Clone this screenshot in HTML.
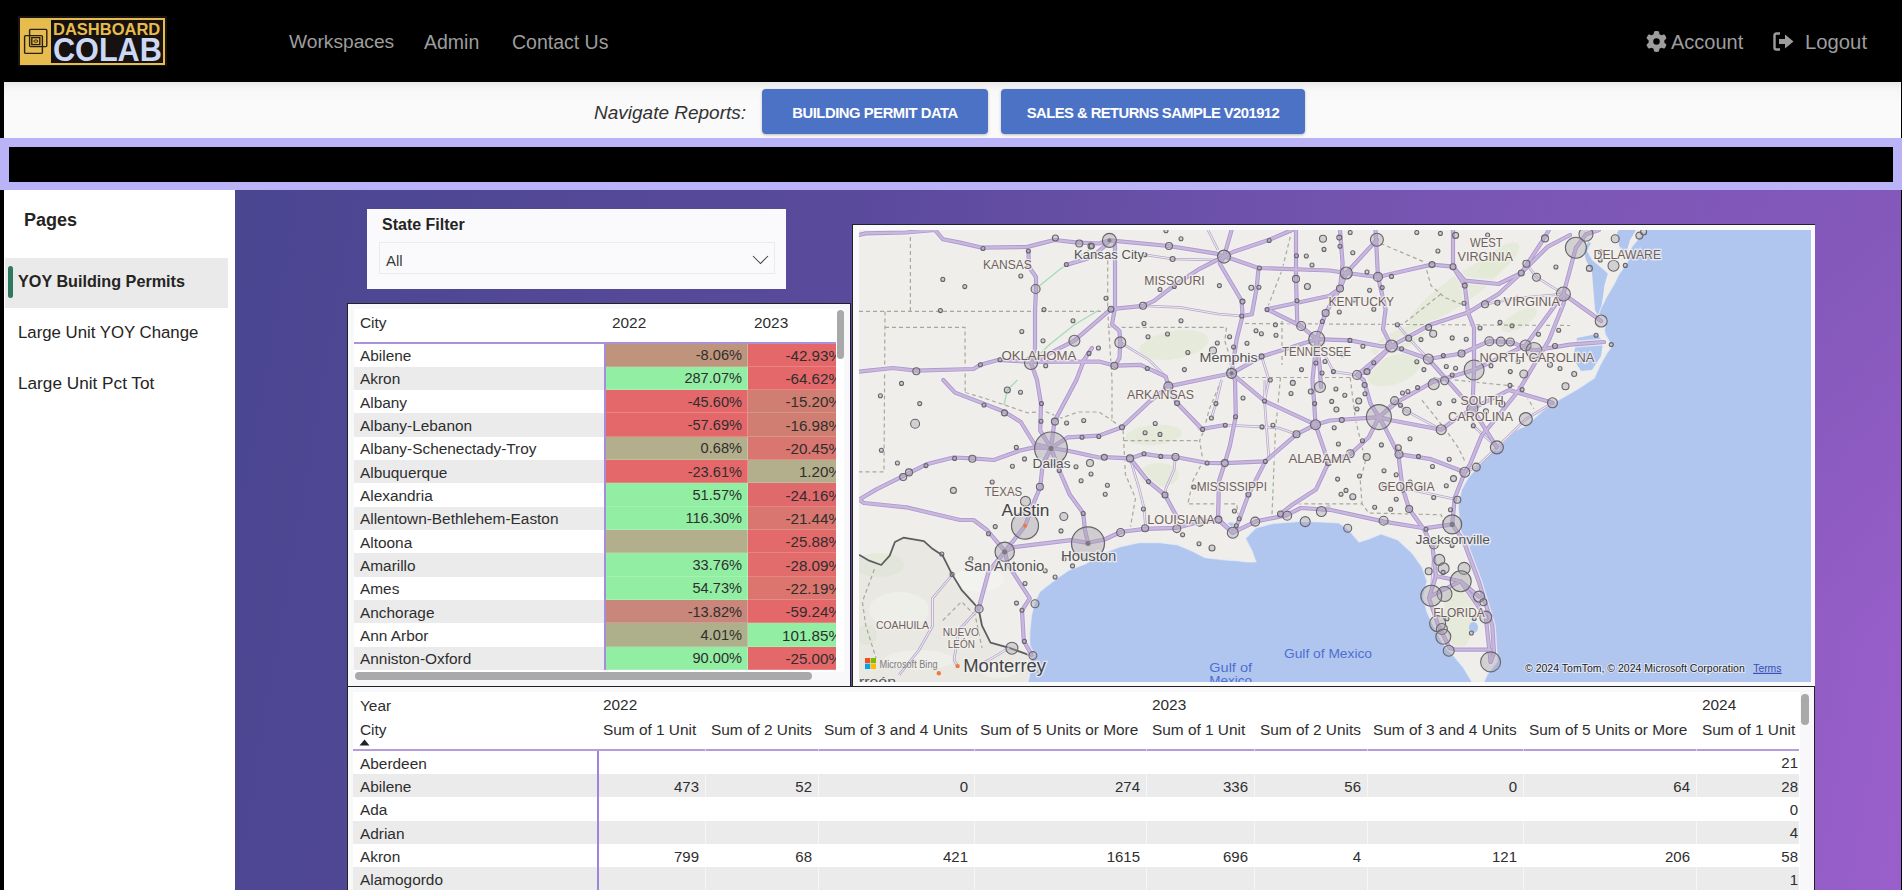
<!DOCTYPE html>
<html><head><meta charset="utf-8">
<style>
*{box-sizing:border-box;margin:0;padding:0}
html,body{width:1902px;height:890px;overflow:hidden;background:#000;font-family:"Liberation Sans",sans-serif;color:#252423}
.abs{position:absolute}
#top{position:absolute;left:0;top:0;width:1902px;height:82px;background:#000}
.nav{position:absolute;top:30px;font-size:19.5px;color:#9d9d9d;white-space:nowrap;line-height:24px}
#rep{position:absolute;left:4px;top:82px;width:1897px;height:56px;background:linear-gradient(#e9e9e9 0px,#f7f7f7 8px,#fafafa 20px)}
.btn{position:absolute;top:89px;height:45px;background:#4b72c5;border-radius:4px;color:#fff;font-weight:bold;font-size:14.8px;line-height:48.5px;text-align:center;box-shadow:0 1px 3px rgba(0,0,0,.25);white-space:nowrap}
#pbar{position:absolute;left:0;top:138px;width:1902px;height:52px;background:#bbb3f8}
#pbar .in{position:absolute;left:9px;top:9px;width:1884px;height:35px;background:#000}
#side{position:absolute;left:4px;top:190px;width:231px;height:700px;background:#fff}
#canvas{position:absolute;left:235px;top:190px;width:1666px;height:700px;background:radial-gradient(circle 450px at 100% 0%,rgba(74,70,144,.21) 0%,rgba(74,70,144,0) 100%),linear-gradient(100deg,#4a4690 0%,#5a4a9c 35%,#7a56b4 70%,#9a5fcb 100%)}
.card{position:absolute;background:#fafafc}
.bord{border:1px solid #222}
table{border-collapse:collapse}
.t{position:absolute;white-space:nowrap;font-size:15.4px;line-height:18px;color:#2e2e2e}
</style></head>
<body>
<div id="top">
  <!-- logo -->
  <div class="abs" style="left:18px;top:16px;width:149px;height:50px;background:#1a1410"></div>
  <div class="abs" style="left:20px;top:18px;width:145px;height:47px;background:#e6bc4f"></div>
  <div class="abs" style="left:51px;top:20px;width:112px;height:43px;background:#171110"></div>
  <svg class="abs" style="left:22px;top:26px" width="28" height="30" viewBox="0 0 28 30">
    <rect x="7.6" y="3.4" width="17.2" height="17.2" fill="none" stroke="#2a2010" stroke-width="1.4" rx="1"/>
    <rect x="2.6" y="9.6" width="17.8" height="17.8" fill="none" stroke="#2a2010" stroke-width="1.4" rx="1"/>
    <rect x="9.8" y="11.6" width="8" height="7" fill="none" stroke="#2a2010" stroke-width="1.4"/>
    <ellipse cx="13.8" cy="15.1" rx="2" ry="1.2" fill="none" stroke="#2a2010" stroke-width="1"/>
  </svg>
  <div class="abs" style="left:53px;top:19px;font-weight:bold;font-size:16.5px;line-height:20px;color:#e6bc4f;letter-spacing:0px">DASHBOARD</div>
  <div class="abs" style="left:53px;top:31.5px;font-weight:bold;font-size:34px;line-height:34px;color:#cbd8f6;transform:scaleX(0.9);transform-origin:0 0">COLAB</div>

  <div class="nav" style="left:289px;font-size:19.2px">Workspaces</div>
  <div class="nav" style="left:424px">Admin</div>
  <div class="nav" style="left:512px">Contact Us</div>
  <svg class="abs" style="left:1646px;top:31px" width="21" height="21" viewBox="0 0 512 512"><path fill="#9d9d9d" d="M495.9 166.6c3.2 8.7.5 18.4-6.4 24.6l-43.3 39.4c1.1 8.3 1.7 16.8 1.7 25.4s-.6 17.1-1.7 25.4l43.3 39.4c6.9 6.2 9.6 15.9 6.4 24.6-4.4 11.9-9.7 23.3-15.8 34.3l-4.7 8.1c-6.6 11-14 21.4-22.1 31.2-5.9 7.2-15.7 9.6-24.5 6.8l-55.7-17.7c-13.4 10.3-28.2 18.9-44 25.4l-12.5 57.1c-2 9.1-9 16.3-18.2 17.8-13.8 2.3-28 3.5-42.5 3.5s-28.7-1.2-42.5-3.5c-9.2-1.5-16.2-8.7-18.2-17.8l-12.5-57.1c-15.8-6.5-30.6-15.1-44-25.4L83.1 425.9c-8.8 2.8-18.6.3-24.5-6.8-8.1-9.8-15.5-20.2-22.1-31.2l-4.7-8.1c-6.1-11-11.4-22.4-15.8-34.3-3.2-8.7-.5-18.4 6.4-24.6l43.3-39.4C64.6 273.1 64 264.6 64 256s.6-17.1 1.7-25.4L22.4 191.2c-6.9-6.2-9.6-15.9-6.4-24.6 4.4-11.9 9.7-23.3 15.8-34.3l4.7-8.1c6.6-11 14-21.4 22.1-31.2 5.9-7.2 15.7-9.6 24.5-6.8l55.7 17.7c13.4-10.3 28.2-18.9 44-25.4l12.5-57.1c2-9.1 9-16.3 18.2-17.8C227.3 1.2 241.5 0 256 0s28.7 1.2 42.5 3.5c9.2 1.5 16.2 8.7 18.2 17.8l12.5 57.1c15.8 6.5 30.6 15.1 44 25.4l55.7-17.7c8.8-2.8 18.6-.3 24.5 6.8 8.1 9.8 15.5 20.2 22.1 31.2l4.7 8.1c6.1 11 11.4 22.4 15.8 34.3zM256 336a80 80 0 1 0 0-160 80 80 0 1 0 0 160z"/></svg>
  <div class="nav" style="left:1671px;font-size:20px">Account</div>
  <svg class="abs" style="left:1773px;top:32px" width="22" height="19" viewBox="0 0 22 19">
    <path d="M7 1.5 H3.5 Q1.5 1.5 1.5 3.5 V15.5 Q1.5 17.5 3.5 17.5 H7" fill="none" stroke="#9d9d9d" stroke-width="2.4"/>
    <path d="M6 7 H12 V2.5 L20.5 9.5 L12 16.5 V12 H6 Z" fill="#9d9d9d"/>
  </svg>
  <div class="nav" style="left:1805px;font-size:20.3px">Logout</div>
</div>

<div id="rep"></div>
<div class="abs" style="left:594px;top:101px;font-style:italic;font-size:19px;line-height:24px;color:#333">Navigate Reports:</div>
<div class="btn" style="left:762px;width:226px;letter-spacing:-0.45px">BUILDING PERMIT DATA</div>
<div class="btn" style="left:1001px;width:304px;letter-spacing:-0.55px">SALES &amp; RETURNS SAMPLE V201912</div>

<div id="pbar"><div class="in"></div></div>

<div id="side">
  <div class="abs" style="left:20px;top:18px;font-weight:bold;font-size:18px;line-height:24px;color:#252423">Pages</div>
  <div class="abs" style="left:1px;top:68px;width:223px;height:50px;background:#eaeaea"></div>
  <div class="abs" style="left:4px;top:76px;width:5px;height:32px;background:#2f7a5f;border-radius:3px"></div>
  <div class="abs" style="left:14px;top:80px;font-weight:bold;font-size:16.2px;line-height:22px;color:#252423">YOY Building Permits</div>
  <div class="abs" style="left:14px;top:131.5px;font-size:16.8px;line-height:22px;color:#252423">Large Unit YOY Change</div>
  <div class="abs" style="left:14px;top:181.5px;font-size:17.2px;line-height:22px;color:#252423">Large Unit Pct Tot</div>
</div>

<div id="canvas"></div>
<div class="abs" style="left:1901px;top:190px;width:1px;height:700px;background:#000"></div>

<!-- state filter -->
<div class="card" style="left:367px;top:209px;width:419px;height:80px">
  <div class="abs" style="left:15px;top:6px;font-weight:bold;font-size:16px;line-height:20px;color:#252423">State Filter</div>
  <div class="abs" style="left:12px;top:33px;width:396px;height:32px;border:1px solid #ebebee;background:#fafafc"></div>
  <div class="abs" style="left:19px;top:43px;font-size:15px;line-height:18px;color:#3a3a3a">All</div>
  <svg class="abs" style="left:385px;top:46px" width="17" height="10" viewBox="0 0 17 10"><path d="M1 1 L8.5 8.5 L16 1" fill="none" stroke="#3d3d45" stroke-width="1.05"/></svg>
</div>

<!-- city table card -->
<div class="abs" style="left:347px;top:303px;width:504px;height:384px;border:1px solid #222;background:#f8f8fb"></div>
<div class="abs" style="left:354px;top:309px;width:490px;height:363px;background:#fff"></div>
<div class="abs" style="left:354px;top:309px;width:482px;height:361px;overflow:hidden">
<div class="t" style="left:6px;top:5px;line-height:18px">City</div>
<div class="t" style="left:258px;top:5px">2022</div>
<div class="t" style="left:400px;top:5px">2023</div>
<div class="abs" style="left:0;top:33px;width:482px;height:2px;background:#ab92dc"></div>
<div class="abs" style="left:0;top:34.50px;width:250px;height:23.33px;background:#fff"></div>
<div class="t" style="left:6px;top:35.10px;line-height:23.33px">Abilene</div>
<div class="abs" style="left:251px;top:34.50px;width:143px;height:23.33px;background:#bf947c;border-bottom:1px solid rgba(255,255,255,.18);border-right:1px solid rgba(255,255,255,.25)"></div>
<div class="t" style="right:94px;top:35.00px;line-height:23.33px;font-size:14.6px">-8.06%</div>
<div class="abs" style="left:394px;top:34.50px;width:100px;height:23.33px;background:#e4686a;border-bottom:1px solid rgba(255,255,255,.18)"></div>
<div class="t" style="left:420px;top:34.80px;line-height:23.33px;font-size:15.2px;width:68px;text-align:right">-42.93%</div>
<div class="abs" style="left:0;top:57.83px;width:250px;height:23.33px;background:#ebebeb"></div>
<div class="t" style="left:6px;top:58.43px;line-height:23.33px">Akron</div>
<div class="abs" style="left:251px;top:57.83px;width:143px;height:23.33px;background:#91eea3;border-bottom:1px solid rgba(255,255,255,.18);border-right:1px solid rgba(255,255,255,.25)"></div>
<div class="t" style="right:94px;top:58.33px;line-height:23.33px;font-size:14.6px">287.07%</div>
<div class="abs" style="left:394px;top:57.83px;width:100px;height:23.33px;background:#e4686a;border-bottom:1px solid rgba(255,255,255,.18)"></div>
<div class="t" style="left:420px;top:58.13px;line-height:23.33px;font-size:15.2px;width:68px;text-align:right">-64.62%</div>
<div class="abs" style="left:0;top:81.16px;width:250px;height:23.33px;background:#fff"></div>
<div class="t" style="left:6px;top:81.76px;line-height:23.33px">Albany</div>
<div class="abs" style="left:251px;top:81.16px;width:143px;height:23.33px;background:#e4686a;border-bottom:1px solid rgba(255,255,255,.18);border-right:1px solid rgba(255,255,255,.25)"></div>
<div class="t" style="right:94px;top:81.66px;line-height:23.33px;font-size:14.6px">-45.60%</div>
<div class="abs" style="left:394px;top:81.16px;width:100px;height:23.33px;background:#d07e71;border-bottom:1px solid rgba(255,255,255,.18)"></div>
<div class="t" style="left:420px;top:81.46px;line-height:23.33px;font-size:15.2px;width:68px;text-align:right">-15.20%</div>
<div class="abs" style="left:0;top:104.49px;width:250px;height:23.33px;background:#ebebeb"></div>
<div class="t" style="left:6px;top:105.09px;line-height:23.33px">Albany-Lebanon</div>
<div class="abs" style="left:251px;top:104.49px;width:143px;height:23.33px;background:#e4686a;border-bottom:1px solid rgba(255,255,255,.18);border-right:1px solid rgba(255,255,255,.25)"></div>
<div class="t" style="right:94px;top:104.99px;line-height:23.33px;font-size:14.6px">-57.69%</div>
<div class="abs" style="left:394px;top:104.49px;width:100px;height:23.33px;background:#d07e71;border-bottom:1px solid rgba(255,255,255,.18)"></div>
<div class="t" style="left:420px;top:104.79px;line-height:23.33px;font-size:15.2px;width:68px;text-align:right">-16.98%</div>
<div class="abs" style="left:0;top:127.82px;width:250px;height:23.33px;background:#fff"></div>
<div class="t" style="left:6px;top:128.42px;line-height:23.33px">Albany-Schenectady-Troy</div>
<div class="abs" style="left:251px;top:127.82px;width:143px;height:23.33px;background:#b3ae8b;border-bottom:1px solid rgba(255,255,255,.18);border-right:1px solid rgba(255,255,255,.25)"></div>
<div class="t" style="right:94px;top:128.32px;line-height:23.33px;font-size:14.6px">0.68%</div>
<div class="abs" style="left:394px;top:127.82px;width:100px;height:23.33px;background:#d9766f;border-bottom:1px solid rgba(255,255,255,.18)"></div>
<div class="t" style="left:420px;top:128.12px;line-height:23.33px;font-size:15.2px;width:68px;text-align:right">-20.45%</div>
<div class="abs" style="left:0;top:151.15px;width:250px;height:23.33px;background:#ebebeb"></div>
<div class="t" style="left:6px;top:151.75px;line-height:23.33px">Albuquerque</div>
<div class="abs" style="left:251px;top:151.15px;width:143px;height:23.33px;background:#e4686a;border-bottom:1px solid rgba(255,255,255,.18);border-right:1px solid rgba(255,255,255,.25)"></div>
<div class="t" style="right:94px;top:151.65px;line-height:23.33px;font-size:14.6px">-23.61%</div>
<div class="abs" style="left:394px;top:151.15px;width:100px;height:23.33px;background:#b3ae8b;border-bottom:1px solid rgba(255,255,255,.18)"></div>
<div class="t" style="left:420px;top:151.45px;line-height:23.33px;font-size:15.2px;width:68px;text-align:right">1.20%</div>
<div class="abs" style="left:0;top:174.48px;width:250px;height:23.33px;background:#fff"></div>
<div class="t" style="left:6px;top:175.08px;line-height:23.33px">Alexandria</div>
<div class="abs" style="left:251px;top:174.48px;width:143px;height:23.33px;background:#91eea3;border-bottom:1px solid rgba(255,255,255,.18);border-right:1px solid rgba(255,255,255,.25)"></div>
<div class="t" style="right:94px;top:174.98px;line-height:23.33px;font-size:14.6px">51.57%</div>
<div class="abs" style="left:394px;top:174.48px;width:100px;height:23.33px;background:#e0696b;border-bottom:1px solid rgba(255,255,255,.18)"></div>
<div class="t" style="left:420px;top:174.78px;line-height:23.33px;font-size:15.2px;width:68px;text-align:right">-24.16%</div>
<div class="abs" style="left:0;top:197.81px;width:250px;height:23.33px;background:#ebebeb"></div>
<div class="t" style="left:6px;top:198.41px;line-height:23.33px">Allentown-Bethlehem-Easton</div>
<div class="abs" style="left:251px;top:197.81px;width:143px;height:23.33px;background:#91eea3;border-bottom:1px solid rgba(255,255,255,.18);border-right:1px solid rgba(255,255,255,.25)"></div>
<div class="t" style="right:94px;top:198.31px;line-height:23.33px;font-size:14.6px">116.30%</div>
<div class="abs" style="left:394px;top:197.81px;width:100px;height:23.33px;background:#d9766f;border-bottom:1px solid rgba(255,255,255,.18)"></div>
<div class="t" style="left:420px;top:198.11px;line-height:23.33px;font-size:15.2px;width:68px;text-align:right">-21.44%</div>
<div class="abs" style="left:0;top:221.14px;width:250px;height:23.33px;background:#fff"></div>
<div class="t" style="left:6px;top:221.74px;line-height:23.33px">Altoona</div>
<div class="abs" style="left:251px;top:221.14px;width:143px;height:23.33px;background:#b3ae8b;border-bottom:1px solid rgba(255,255,255,.18);border-right:1px solid rgba(255,255,255,.25)"></div>
<div class="t" style="right:94px;top:221.64px;line-height:23.33px;font-size:14.6px"></div>
<div class="abs" style="left:394px;top:221.14px;width:100px;height:23.33px;background:#e36a6b;border-bottom:1px solid rgba(255,255,255,.18)"></div>
<div class="t" style="left:420px;top:221.44px;line-height:23.33px;font-size:15.2px;width:68px;text-align:right">-25.88%</div>
<div class="abs" style="left:0;top:244.47px;width:250px;height:23.33px;background:#ebebeb"></div>
<div class="t" style="left:6px;top:245.07px;line-height:23.33px">Amarillo</div>
<div class="abs" style="left:251px;top:244.47px;width:143px;height:23.33px;background:#91eea3;border-bottom:1px solid rgba(255,255,255,.18);border-right:1px solid rgba(255,255,255,.25)"></div>
<div class="t" style="right:94px;top:244.97px;line-height:23.33px;font-size:14.6px">33.76%</div>
<div class="abs" style="left:394px;top:244.47px;width:100px;height:23.33px;background:#e26b6b;border-bottom:1px solid rgba(255,255,255,.18)"></div>
<div class="t" style="left:420px;top:244.77px;line-height:23.33px;font-size:15.2px;width:68px;text-align:right">-28.09%</div>
<div class="abs" style="left:0;top:267.80px;width:250px;height:23.33px;background:#fff"></div>
<div class="t" style="left:6px;top:268.40px;line-height:23.33px">Ames</div>
<div class="abs" style="left:251px;top:267.80px;width:143px;height:23.33px;background:#91eea3;border-bottom:1px solid rgba(255,255,255,.18);border-right:1px solid rgba(255,255,255,.25)"></div>
<div class="t" style="right:94px;top:268.30px;line-height:23.33px;font-size:14.6px">54.73%</div>
<div class="abs" style="left:394px;top:267.80px;width:100px;height:23.33px;background:#db756e;border-bottom:1px solid rgba(255,255,255,.18)"></div>
<div class="t" style="left:420px;top:268.10px;line-height:23.33px;font-size:15.2px;width:68px;text-align:right">-22.19%</div>
<div class="abs" style="left:0;top:291.13px;width:250px;height:23.33px;background:#ebebeb"></div>
<div class="t" style="left:6px;top:291.73px;line-height:23.33px">Anchorage</div>
<div class="abs" style="left:251px;top:291.13px;width:143px;height:23.33px;background:#c9867a;border-bottom:1px solid rgba(255,255,255,.18);border-right:1px solid rgba(255,255,255,.25)"></div>
<div class="t" style="right:94px;top:291.63px;line-height:23.33px;font-size:14.6px">-13.82%</div>
<div class="abs" style="left:394px;top:291.13px;width:100px;height:23.33px;background:#e4686a;border-bottom:1px solid rgba(255,255,255,.18)"></div>
<div class="t" style="left:420px;top:291.43px;line-height:23.33px;font-size:15.2px;width:68px;text-align:right">-59.24%</div>
<div class="abs" style="left:0;top:314.46px;width:250px;height:23.33px;background:#fff"></div>
<div class="t" style="left:6px;top:315.06px;line-height:23.33px">Ann Arbor</div>
<div class="abs" style="left:251px;top:314.46px;width:143px;height:23.33px;background:#aeb08b;border-bottom:1px solid rgba(255,255,255,.18);border-right:1px solid rgba(255,255,255,.25)"></div>
<div class="t" style="right:94px;top:314.96px;line-height:23.33px;font-size:14.6px">4.01%</div>
<div class="abs" style="left:394px;top:314.46px;width:100px;height:23.33px;background:#91eea3;border-bottom:1px solid rgba(255,255,255,.18)"></div>
<div class="t" style="left:420px;top:314.76px;line-height:23.33px;font-size:15.2px;width:68px;text-align:right">101.85%</div>
<div class="abs" style="left:0;top:337.79px;width:250px;height:23.33px;background:#ebebeb"></div>
<div class="t" style="left:6px;top:338.39px;line-height:23.33px">Anniston-Oxford</div>
<div class="abs" style="left:251px;top:337.79px;width:143px;height:23.33px;background:#91eea3;border-bottom:1px solid rgba(255,255,255,.18);border-right:1px solid rgba(255,255,255,.25)"></div>
<div class="t" style="right:94px;top:338.29px;line-height:23.33px;font-size:14.6px">90.00%</div>
<div class="abs" style="left:394px;top:337.79px;width:100px;height:23.33px;background:#e4686a;border-bottom:1px solid rgba(255,255,255,.18)"></div>
<div class="t" style="left:420px;top:338.09px;line-height:23.33px;font-size:15.2px;width:68px;text-align:right">-25.00%</div>
<div class="abs" style="left:250px;top:34px;width:2px;height:330px;background:#a58cdc"></div>
</div>
<div class="abs" style="left:837px;top:310px;width:7px;height:49px;background:#a9a9a9;border-radius:4px"></div>
<div class="abs" style="left:355px;top:672px;width:457px;height:8px;background:#a9a9a9;border-radius:4px"></div>

<!-- map card -->
<div class="abs" style="left:852px;top:224px;width:963px;height:463px;border-top:1px solid #222;border-left:1px solid #222;background:#fafafc"></div>
<div class="abs" style="left:859px;top:230px;width:952px;height:452px;overflow:hidden;background:#efeee9"><svg width="952" height="452" viewBox="0 0 952 452" style="position:absolute;left:0;top:0;font-family:'Liberation Sans',sans-serif">
<rect width="952" height="452" fill="#efeeea"/>
<ellipse cx="315" cy="115" rx="35" ry="14" transform="rotate(-10 315 115)" fill="#dfe8cd" opacity=".55"/>
<ellipse cx="295" cy="205" rx="28" ry="10" transform="rotate(-5 295 205)" fill="#dfe8cd" opacity=".55"/>
<ellipse cx="600" cy="60" rx="60" ry="14" transform="rotate(-35 600 60)" fill="#dfe8cd" opacity=".55"/>
<ellipse cx="540" cy="110" rx="30" ry="10" transform="rotate(-25 540 110)" fill="#dfe8cd" opacity=".55"/>
<ellipse cx="20" cy="335" rx="25" ry="12" transform="rotate(0 20 335)" fill="#dfe8cd" opacity=".55"/>
<ellipse cx="600" cy="380" rx="15" ry="40" transform="rotate(0 600 380)" fill="#dfe8cd" opacity=".55"/>
<ellipse cx="690" cy="200" rx="12" ry="8" transform="rotate(0 690 200)" fill="#dfe8cd" opacity=".55"/>
<ellipse cx="660" cy="90" rx="20" ry="8" transform="rotate(-30 660 90)" fill="#dfe8cd" opacity=".55"/>
<ellipse cx="535" cy="140" rx="28" ry="14" transform="rotate(-20 535 140)" fill="#dfe8cd" opacity=".55"/>
<ellipse cx="8" cy="405" rx="10" ry="10" transform="rotate(0 8 405)" fill="#dfe8cd" opacity=".55"/>
<ellipse cx="640" cy="30" rx="25" ry="10" transform="rotate(-40 640 30)" fill="#dfe8cd" opacity=".55"/>
<ellipse cx="300" cy="245" rx="20" ry="12" transform="rotate(0 300 245)" fill="#dfe8cd" opacity=".55"/>
<polygon points="0.0,324.8 10.2,330.7 22.2,335.0 30.7,325.6 35.9,312.0 44.4,307.7 64.9,311.1 73.5,318.8 83.7,325.6 93.1,344.4 102.5,359.8 119.6,378.6 123.0,395.7 131.5,412.7 150.3,417.9 169.1,424.7 174.0,425.5 172.0,452.0 0.0,452.0" fill="#dcdad4" opacity=".3"/>
<ellipse cx="40" cy="380" rx="30" ry="18" fill="#f6f5f2" opacity=".5"/>
<ellipse cx="120" cy="350" rx="25" ry="12" fill="#f6f5f2" opacity=".5"/>
<ellipse cx="60" cy="430" rx="35" ry="10" fill="#f6f5f2" opacity=".5"/>
<ellipse cx="140" cy="440" rx="20" ry="8" fill="#f6f5f2" opacity=".5"/>
<polygon points="169.0,452.0 172.5,436.7 170.8,419.6 170.8,402.5 172.5,385.4 176.0,371.7 181.0,361.5 196.4,349.5 209.3,340.5 226.4,334.0 243.5,323.4 260.6,317.0 279.8,312.7 301.0,312.7 318.0,314.8 333.0,321.0 346.0,327.7 365.0,329.8 380.0,331.0 386.6,332.0 397.0,332.0 393.0,321.0 386.6,308.4 397.0,297.8 414.0,293.5 441.0,291.4 460.0,292.0 480.0,293.0 490.0,300.0 500.0,312.0 510.0,309.0 522.0,304.0 539.0,310.0 553.0,323.0 563.0,337.0 568.0,351.0 564.0,367.0 568.0,382.0 575.0,397.0 584.0,414.0 594.0,425.0 604.0,437.0 613.0,452.0 625.0,452.0 628.0,445.0 638.4,431.5 635.0,402.5 624.7,375.2 617.9,351.2 607.7,325.6 604.2,310.2 601.5,300.0 599.1,276.4 602.5,259.6 609.2,247.8 619.3,236.0 632.8,222.5 644.6,212.4 656.4,200.6 666.6,195.7 685.0,179.8 701.0,169.3 719.4,158.7 735.3,148.0 741.3,134.8 748.0,123.0 753.0,116.3 746.4,104.5 745.4,100.0 747.7,89.7 739.6,84.0 741.9,78.2 747.7,66.8 754.5,55.3 760.3,43.8 768.3,32.4 772.0,18.0 780.0,8.0 788.5,0.0 952.0,0.0 952.0,452.0" fill="#b1c6ef"/>
<polygon points="728.0,21.0 733.0,30.0 745.0,40.0 748.8,43.8 745.4,55.3 744.0,66.8 742.0,78.2 739.0,86.0 736.0,80.0 735.0,66.8 734.0,55.3 733.0,42.0 727.0,30.0 725.0,22.0 729.0,12.0 732.0,13.0" fill="#b1c6ef"/>
<polygon points="758.0,3.0 760.0,0.0 777.0,0.0 771.0,10.0 768.0,20.0 764.0,24.0 760.0,15.0" fill="#b1c6ef"/>
<polygon points="718.0,108.0 738.0,104.0 744.0,112.0 742.0,126.0 733.0,140.0 722.0,141.0 714.0,128.0" fill="#b0c7ef"/>
<ellipse cx="614.5" cy="397.4" rx="4.5" ry="5.5" fill="#b0c7ef"/>
<ellipse cx="372" cy="296" rx="6" ry="3.5" fill="#b0c7ef"/>
<polyline points="169.0,452.0 172.5,436.7 170.8,419.6 170.8,402.5 172.5,385.4 176.0,371.7 181.0,361.5 196.4,349.5 209.3,340.5 226.4,334.0 243.5,323.4 260.6,317.0 279.8,312.7 301.0,312.7 318.0,314.8 333.0,321.0 346.0,327.7 365.0,329.8 380.0,331.0 386.6,332.0 397.0,332.0 393.0,321.0 386.6,308.4 397.0,297.8 414.0,293.5 441.0,291.4 460.0,292.0 480.0,293.0 490.0,300.0 500.0,312.0 510.0,309.0 522.0,304.0 539.0,310.0 553.0,323.0 563.0,337.0 568.0,351.0 564.0,367.0 568.0,382.0 575.0,397.0 584.0,414.0 594.0,425.0 604.0,437.0 613.0,452.0 625.0,452.0 628.0,445.0 638.4,431.5 635.0,402.5 624.7,375.2 617.9,351.2 607.7,325.6 604.2,310.2 601.5,300.0 599.1,276.4 602.5,259.6 609.2,247.8 619.3,236.0 632.8,222.5 644.6,212.4 656.4,200.6 666.6,195.7 685.0,179.8 701.0,169.3 719.4,158.7 735.3,148.0 741.3,134.8 748.0,123.0 753.0,116.3 746.4,104.5 745.4,100.0 747.7,89.7 739.6,84.0 741.9,78.2 747.7,66.8 754.5,55.3 760.3,43.8 768.3,32.4 772.0,18.0 780.0,8.0" fill="none" stroke="#e6ecf6" stroke-width="1.2" opacity=".7"/>
<polyline points="51.4,0.0 51.4,81.0" fill="none" stroke="#a9a79e" stroke-width="1.2" stroke-dasharray="4 3"/>
<polyline points="0.0,81.4 248.7,81.4" fill="none" stroke="#a9a79e" stroke-width="1.2" stroke-dasharray="4 3"/>
<polyline points="26.0,81.4 25.0,241.9 0.0,241.9" fill="none" stroke="#a9a79e" stroke-width="1.2" stroke-dasharray="4 3"/>
<polyline points="26.0,97.4 106.0,97.4 106.2,162.6" fill="none" stroke="#a9a79e" stroke-width="1.2" stroke-dasharray="4 3"/>
<polyline points="106.2,162.6 126.4,168.5 151.7,177.0 168.5,182.9 185.4,181.2 202.3,188.0 219.1,182.0 240.0,182.0 253.0,190.5" fill="none" stroke="#a9a79e" stroke-width="1.2" stroke-dasharray="4 3"/>
<polyline points="248.7,23.6 248.7,81.0 253.0,150.0 253.0,190.5 264.0,198.9 264.7,210.7 266.4,244.4 276.5,268.0 271.5,296.6" fill="none" stroke="#a9a79e" stroke-width="1.2" stroke-dasharray="4 3"/>
<polyline points="248.7,97.4 367.5,97.4 365.8,111.0" fill="none" stroke="#a9a79e" stroke-width="1.2" stroke-dasharray="4 3"/>
<polyline points="264.7,210.7 340.6,210.7" fill="none" stroke="#a9a79e" stroke-width="1.2" stroke-dasharray="4 3"/>
<polyline points="365.8,111.0 372.0,130.0 368.0,143.0 362.5,150.0 350.0,180.0 345.0,200.0 340.6,210.7 344.0,231.0 333.8,251.0 328.8,273.9 377.6,273.9 380.0,290.0" fill="none" stroke="#a9a79e" stroke-width="1.2" stroke-dasharray="4 3"/>
<polyline points="421.5,147.5 416.4,200.6 413.0,284.8" fill="none" stroke="#a9a79e" stroke-width="1.2" stroke-dasharray="4 3"/>
<polyline points="386.0,93.5 711.0,95.5" fill="none" stroke="#a9a79e" stroke-width="1.2" stroke-dasharray="4 3"/>
<polyline points="423.0,91.0 423.0,134.8" fill="none" stroke="#a9a79e" stroke-width="1.2" stroke-dasharray="4 3"/>
<polyline points="368.0,147.5 491.0,147.5" fill="none" stroke="#a9a79e" stroke-width="1.2" stroke-dasharray="4 3"/>
<polyline points="491.2,147.5 496.3,188.8 506.4,231.0 501.3,251.0 503.0,273.9" fill="none" stroke="#a9a79e" stroke-width="1.2" stroke-dasharray="4 3"/>
<polyline points="438.3,273.9 503.0,273.9 509.8,283.0 582.2,284.8 585.6,295.0" fill="none" stroke="#a9a79e" stroke-width="1.2" stroke-dasharray="4 3"/>
<polyline points="562.9,170.2 587.3,200.6 599.0,217.4 605.8,231.0" fill="none" stroke="#a9a79e" stroke-width="1.2" stroke-dasharray="4 3"/>
<polyline points="574.7,147.5 619.3,152.5 661.5,156.7 675.0,178.7" fill="none" stroke="#a9a79e" stroke-width="1.2" stroke-dasharray="4 3"/>
<polyline points="521.6,13.5 565.4,32.0 572.0,55.6 585.6,67.4 602.5,74.2" fill="none" stroke="#a9a79e" stroke-width="1.2" stroke-dasharray="4 3"/>
<polyline points="582.0,64.0 543.5,94.4" fill="none" stroke="#a9a79e" stroke-width="1.2" stroke-dasharray="4 3"/>
<polyline points="15.4,339.3 3.4,371.7 6.8,395.7 17.0,428.0" fill="none" stroke="#a9a79e" stroke-width="1.2" stroke-dasharray="4 3"/>
<polyline points="83.7,390.5 102.5,371.7 116.2,385.4 123.0,417.9" fill="none" stroke="#a9a79e" stroke-width="1.2" stroke-dasharray="4 3"/>
<polyline points="433.0,0.0 423.0,40.0 408.0,79.0" fill="none" stroke="#a9a79e" stroke-width="1.2" stroke-dasharray="4 3"/>
<polyline points="176.6,59.0 200.0,40.0 230.0,20.0 240.0,14.0" fill="none" stroke="#a6dcb8" stroke-width="1.4"/>
<polyline points="158.4,150.0 148.3,160.0 145.0,175.0" fill="none" stroke="#a6dcb8" stroke-width="1.4"/>
<polyline points="172.0,133.0 190.0,115.0 215.0,95.0 240.0,80.0" fill="none" stroke="#a6dcb8" stroke-width="1.4"/>
<polyline points="0.0,324.8 10.2,330.7 22.2,335.0 30.7,325.6 35.9,312.0 44.4,307.7 64.9,311.1 73.5,318.8 83.7,325.6 93.1,344.4 102.5,359.8 119.6,378.6 123.0,395.7 131.5,412.7 150.3,417.9 169.1,424.7 174.0,425.5" fill="none" stroke="#5d5d60" stroke-width="1.8" stroke-linejoin="round"/>
<polyline points="0.0,5.0 6.7,3.4 47.0,2.5 76.0,0.0 84.0,9.3 101.0,12.6 123.0,17.7 168.5,16.9 185.0,12.6 195.5,10.0 219.0,12.6 240.0,13.5 250.4,10.4" fill="none" stroke="#f4eef6" stroke-width="7" stroke-linejoin="round" stroke-linecap="round" opacity=".7"/>
<polyline points="250.4,10.4 310.0,16.0 357.4,23.6 365.0,26.6 374.0,22.0 409.7,10.0 433.0,0.0" fill="none" stroke="#f4eef6" stroke-width="7" stroke-linejoin="round" stroke-linecap="round" opacity=".7"/>
<polyline points="365.0,26.6 372.6,28.7 399.5,38.0 471.0,40.5 487.3,43.0 519.0,47.0 546.8,40.5 573.0,34.6 594.0,36.7 605.8,50.6 639.5,54.0 662.3,43.0 688.4,16.9 711.0,5.0" fill="none" stroke="#f4eef6" stroke-width="7" stroke-linejoin="round" stroke-linecap="round" opacity=".7"/>
<polyline points="169.4,21.0 170.0,37.0 177.0,47.0 177.0,59.0 176.0,81.0 176.0,118.0 172.0,133.0 178.0,150.0 182.0,173.6 181.2,200.6 192.0,218.0 183.7,234.3 181.2,257.0 175.3,271.4 166.0,296.0 146.0,321.4 129.8,341.0 119.6,378.6" fill="none" stroke="#f4eef6" stroke-width="7" stroke-linejoin="round" stroke-linecap="round" opacity=".7"/>
<polyline points="0.0,141.6 33.7,138.0 57.3,140.7 114.6,139.0 121.4,134.8 140.0,129.8 172.0,132.0 240.0,131.5 256.0,135.7 281.6,134.8 306.8,146.6 309.4,156.4 340.0,150.0 372.6,143.3" fill="none" stroke="#f4eef6" stroke-width="7" stroke-linejoin="round" stroke-linecap="round" opacity=".7"/>
<polyline points="192.0,218.0 209.0,207.3 240.0,205.6 263.0,197.2 290.0,172.0 309.4,156.4" fill="none" stroke="#f4eef6" stroke-width="7" stroke-linejoin="round" stroke-linecap="round" opacity=".7"/>
<polyline points="372.6,143.3 403.0,126.4 457.7,109.2 490.9,110.4 521.6,116.3 532.5,116.0 569.3,129.0 602.5,123.5 630.3,111.2 651.3,112.0 675.0,120.5 711.0,114.6 745.0,112.0" fill="none" stroke="#f4eef6" stroke-width="7" stroke-linejoin="round" stroke-linecap="round" opacity=".7"/>
<polyline points="365.0,26.6 359.0,29.5 340.6,38.8 315.0,55.6 295.0,70.8 284.0,75.8 252.0,79.2 215.4,110.7 172.0,133.0" fill="none" stroke="#f4eef6" stroke-width="7" stroke-linejoin="round" stroke-linecap="round" opacity=".7"/>
<polyline points="256.0,15.0 256.0,77.5 253.0,94.4 260.5,101.0 261.3,112.4 260.5,128.0 256.0,135.7" fill="none" stroke="#f4eef6" stroke-width="7" stroke-linejoin="round" stroke-linecap="round" opacity=".7"/>
<polyline points="365.0,26.6 360.8,33.7 382.7,70.8 383.5,86.0 377.6,109.6 372.6,143.3 376.0,150.0 376.8,186.2 370.9,215.7 365.8,233.0 360.0,251.0 359.0,290.0 373.8,302.7" fill="none" stroke="#f4eef6" stroke-width="7" stroke-linejoin="round" stroke-linecap="round" opacity=".7"/>
<polyline points="0.0,269.7 16.9,259.6 40.5,247.8 67.4,234.3 94.4,227.5 113.0,228.4 134.8,230.0 160.0,220.8 175.3,217.4 192.0,218.0 209.0,220.8 240.0,227.5 245.3,227.2 271.0,228.4 285.0,223.8 301.8,226.4 316.5,227.0 348.1,233.0 365.8,233.1 406.3,231.4 437.5,204.3 456.5,194.7 471.0,190.5 519.9,187.1 533.4,190.5 582.2,199.7 592.4,192.0 613.4,178.7 650.0,160.0 693.5,172.8" fill="none" stroke="#f4eef6" stroke-width="7" stroke-linejoin="round" stroke-linecap="round" opacity=".7"/>
<polyline points="0.0,269.7 5.0,273.0 47.2,277.3 101.0,290.0 114.6,290.0 128.0,300.0 146.0,321.4 155.4,317.0 211.8,310.2 229.0,312.8 245.6,309.5 261.6,302.0 286.0,298.8 318.0,297.8 341.7,291.4 359.9,289.6 373.8,302.7 397.0,291.4 427.0,285.4 441.7,278.0 471.0,279.8 525.0,291.6 565.4,298.3 593.2,294.4" fill="none" stroke="#f4eef6" stroke-width="7" stroke-linejoin="round" stroke-linecap="round" opacity=".7"/>
<polyline points="192.0,218.0 200.6,241.0 210.7,264.6 224.2,283.0 225.9,300.0 229.0,312.8" fill="none" stroke="#f4eef6" stroke-width="7" stroke-linejoin="round" stroke-linecap="round" opacity=".7"/>
<polyline points="192.0,218.0 195.5,191.3 217.4,150.0 225.0,130.0 233.0,118.0" fill="none" stroke="#f4eef6" stroke-width="7" stroke-linejoin="round" stroke-linecap="round" opacity=".7"/>
<polyline points="146.0,321.4 148.6,334.2 170.8,368.3 163.0,380.3 164.8,411.0 172.5,424.7" fill="none" stroke="#f4eef6" stroke-width="7" stroke-linejoin="round" stroke-linecap="round" opacity=".7"/>
<polyline points="84.3,150.0 96.0,162.6 124.7,173.6 145.8,182.0 161.8,192.0 175.3,214.0 192.0,218.0" fill="none" stroke="#f4eef6" stroke-width="7" stroke-linejoin="round" stroke-linecap="round" opacity=".7"/>
<polyline points="271.0,228.4 289.5,251.6 306.0,265.0 318.6,288.2" fill="none" stroke="#f4eef6" stroke-width="7" stroke-linejoin="round" stroke-linecap="round" opacity=".7"/>
<polyline points="406.3,231.4 389.4,264.6 380.2,289.9 373.8,302.7" fill="none" stroke="#f4eef6" stroke-width="7" stroke-linejoin="round" stroke-linecap="round" opacity=".7"/>
<polyline points="487.3,43.0 481.0,58.5 466.6,83.0 457.7,109.2 453.5,150.0 455.2,173.6 456.5,194.7 469.5,232.6 456.9,259.6 433.3,274.7 421.5,284.0" fill="none" stroke="#f4eef6" stroke-width="7" stroke-linejoin="round" stroke-linecap="round" opacity=".7"/>
<polyline points="516.5,0.0 519.0,47.0 526.6,79.2 524.0,99.4 532.5,116.0 508.0,141.6 498.0,145.0 504.7,150.0 511.5,173.6 519.9,187.1 526.6,198.9 539.3,224.2 543.5,257.9 550.2,279.0 565.4,300.0 573.5,317.0 577.0,346.0 570.0,368.0 578.6,393.6 590.6,418.0 595.7,419.6 631.6,419.6" fill="none" stroke="#f4eef6" stroke-width="7" stroke-linejoin="round" stroke-linecap="round" opacity=".7"/>
<polyline points="532.5,116.0 572.0,94.4 609.0,82.6 639.5,64.0 662.3,43.0 681.7,13.5 690.0,0.0" fill="none" stroke="#f4eef6" stroke-width="7" stroke-linejoin="round" stroke-linecap="round" opacity=".7"/>
<polyline points="594.0,0.0 594.0,36.7 605.8,55.6 609.0,82.6 615.0,97.8 615.0,140.0 613.4,178.7 637.9,217.4" fill="none" stroke="#f4eef6" stroke-width="7" stroke-linejoin="round" stroke-linecap="round" opacity=".7"/>
<polyline points="704.4,64.0 666.5,115.5 615.0,140.0 573.8,152.0 538.4,171.9 519.9,187.1 509.8,207.3 491.2,224.2 469.5,232.6" fill="none" stroke="#f4eef6" stroke-width="7" stroke-linejoin="round" stroke-linecap="round" opacity=".7"/>
<polyline points="716.9,17.7 704.4,64.0 705.0,72.5 690.0,110.0 675.0,135.0 660.0,160.0 640.0,185.0 622.7,205.6 611.0,234.3 605.8,242.2 595.7,268.0 593.2,294.4 604.2,310.2 619.6,351.0 633.3,395.7 635.0,423.0 631.6,431.9" fill="none" stroke="#f4eef6" stroke-width="7" stroke-linejoin="round" stroke-linecap="round" opacity=".7"/>
<polyline points="539.3,224.2 572.0,229.2 605.8,242.2" fill="none" stroke="#f4eef6" stroke-width="7" stroke-linejoin="round" stroke-linecap="round" opacity=".7"/>
<polyline points="408.0,79.2 471.0,65.7 481.0,58.5" fill="none" stroke="#f4eef6" stroke-width="7" stroke-linejoin="round" stroke-linecap="round" opacity=".7"/>
<polyline points="399.5,38.0 397.8,57.3 392.8,84.3 383.5,86.0" fill="none" stroke="#f4eef6" stroke-width="7" stroke-linejoin="round" stroke-linecap="round" opacity=".7"/>
<polyline points="372.6,143.3 405.5,171.0 456.5,194.7" fill="none" stroke="#f4eef6" stroke-width="7" stroke-linejoin="round" stroke-linecap="round" opacity=".7"/>
<polyline points="572.3,365.8 601.7,351.2 620.0,366.6" fill="none" stroke="#f4eef6" stroke-width="7" stroke-linejoin="round" stroke-linecap="round" opacity=".7"/>
<polyline points="577.0,346.0 601.7,351.2 626.8,387.1 631.6,431.9" fill="none" stroke="#f4eef6" stroke-width="7" stroke-linejoin="round" stroke-linecap="round" opacity=".7"/>
<polyline points="716.9,17.7 727.0,4.2 740.0,0.0" fill="none" stroke="#f4eef6" stroke-width="7" stroke-linejoin="round" stroke-linecap="round" opacity=".7"/>
<polyline points="437.0,0.0 437.0,48.9 438.3,94.4 442.2,96.0" fill="none" stroke="#f4eef6" stroke-width="7" stroke-linejoin="round" stroke-linecap="round" opacity=".7"/>
<polyline points="487.3,43.0 481.0,58.5 466.6,83.0 457.7,109.2" fill="none" stroke="#f4eef6" stroke-width="7" stroke-linejoin="round" stroke-linecap="round" opacity=".7"/>
<polyline points="408.0,79.2 441.7,96.0 457.7,109.2" fill="none" stroke="#f4eef6" stroke-width="7" stroke-linejoin="round" stroke-linecap="round" opacity=".7"/>
<polyline points="481.0,0.0 483.6,33.7 481.0,58.5 471.0,65.7" fill="none" stroke="#f4eef6" stroke-width="7" stroke-linejoin="round" stroke-linecap="round" opacity=".7"/>
<polyline points="517.9,9.8 487.3,43.0" fill="none" stroke="#f4eef6" stroke-width="7" stroke-linejoin="round" stroke-linecap="round" opacity=".7"/>
<polyline points="372.6,0.0 365.0,26.6" fill="none" stroke="#f4eef6" stroke-width="7" stroke-linejoin="round" stroke-linecap="round" opacity=".7"/>
<polyline points="207.3,34.9 232.0,27.5 244.6,17.0 250.4,10.4" fill="none" stroke="#f4eef6" stroke-width="7" stroke-linejoin="round" stroke-linecap="round" opacity=".7"/>
<polyline points="704.4,64.0 742.2,91.0" fill="none" stroke="#f4eef6" stroke-width="7" stroke-linejoin="round" stroke-linecap="round" opacity=".7"/>
<polyline points="462.0,157.0 461.0,140.0 457.7,109.2" fill="none" stroke="#f4eef6" stroke-width="7" stroke-linejoin="round" stroke-linecap="round" opacity=".7"/>
<polyline points="498.0,145.0 532.5,116.0" fill="none" stroke="#f4eef6" stroke-width="7" stroke-linejoin="round" stroke-linecap="round" opacity=".7"/>
<polyline points="569.3,129.0 613.4,178.7" fill="none" stroke="#f4eef6" stroke-width="7" stroke-linejoin="round" stroke-linecap="round" opacity=".7"/>
<polyline points="309.4,156.4 318.0,173.0 343.0,199.0 366.0,195.0" fill="none" stroke="#f4eef6" stroke-width="7" stroke-linejoin="round" stroke-linecap="round" opacity=".7"/>
<polyline points="338.9,198.9 366.0,195.0 403.0,196.9" fill="none" stroke="#b3a6c8" stroke-width="2.6" stroke-linejoin="round"/>
<polyline points="92.2,346.0 73.5,368.3 73.5,396.0 60.0,420.0 40.0,445.0" fill="none" stroke="#b3a6c8" stroke-width="2.6" stroke-linejoin="round"/>
<polyline points="119.6,378.6 100.0,400.0 95.0,430.0 98.6,436.0" fill="none" stroke="#b3a6c8" stroke-width="2.6" stroke-linejoin="round"/>
<polyline points="150.0,418.0 130.0,430.0 110.0,440.0" fill="none" stroke="#b3a6c8" stroke-width="2.6" stroke-linejoin="round"/>
<polyline points="403.0,196.9 420.0,198.0 437.5,204.3" fill="none" stroke="#b3a6c8" stroke-width="2.6" stroke-linejoin="round"/>
<polyline points="462.4,281.5 471.0,275.6" fill="none" stroke="#b3a6c8" stroke-width="2.6" stroke-linejoin="round"/>
<polyline points="285.8,24.8 313.6,29.0 359.0,30.0" fill="none" stroke="#b3a6c8" stroke-width="2.6" stroke-linejoin="round"/>
<polyline points="284.0,75.8 322.0,77.5 359.0,84.0 382.7,86.0" fill="none" stroke="#b3a6c8" stroke-width="2.6" stroke-linejoin="round"/>
<polyline points="349.0,0.0 359.0,20.0" fill="none" stroke="#b3a6c8" stroke-width="2.6" stroke-linejoin="round"/>
<polyline points="667.4,33.7 677.5,47.2 704.4,64.0" fill="none" stroke="#b3a6c8" stroke-width="2.6" stroke-linejoin="round"/>
<polyline points="626.0,74.2 658.0,68.3 704.4,64.0" fill="none" stroke="#b3a6c8" stroke-width="2.6" stroke-linejoin="round"/>
<polyline points="352.4,188.0 356.9,173.6 362.5,150.0" fill="none" stroke="#b3a6c8" stroke-width="2.6" stroke-linejoin="round"/>
<polyline points="316.5,227.0 315.0,240.0 307.0,258.0 306.0,265.0" fill="none" stroke="#b3a6c8" stroke-width="2.6" stroke-linejoin="round"/>
<polyline points="406.0,150.0 405.5,171.0 410.0,230.0" fill="none" stroke="#b3a6c8" stroke-width="2.6" stroke-linejoin="round"/>
<polyline points="271.0,228.4 280.0,258.0 285.0,278.0 286.6,298.0" fill="none" stroke="#b3a6c8" stroke-width="2.6" stroke-linejoin="round"/>
<polyline points="543.5,257.9 598.3,269.7" fill="none" stroke="#b3a6c8" stroke-width="2.6" stroke-linejoin="round"/>
<polyline points="693.5,172.8 666.8,189.1 637.9,217.4 617.3,237.1 605.8,242.2" fill="none" stroke="#b3a6c8" stroke-width="2.6" stroke-linejoin="round"/>
<polyline points="261.3,112.4 290.0,130.0 306.8,146.6" fill="none" stroke="#b3a6c8" stroke-width="2.6" stroke-linejoin="round"/>
<polyline points="574.9,314.5 572.3,365.8" fill="none" stroke="#b3a6c8" stroke-width="2.6" stroke-linejoin="round"/>
<polyline points="519.9,187.1 535.6,170.6 547.7,181.2 582.2,199.7" fill="none" stroke="#b3a6c8" stroke-width="2.6" stroke-linejoin="round"/>
<polyline points="402.6,126.4 410.0,150.0 405.5,171.0" fill="none" stroke="#b3a6c8" stroke-width="2.6" stroke-linejoin="round"/>
<polyline points="637.9,217.4 614.3,195.8 613.4,178.7" fill="none" stroke="#b3a6c8" stroke-width="2.6" stroke-linejoin="round"/>
<polyline points="498.0,145.0 474.4,141.6 457.7,109.2" fill="none" stroke="#b3a6c8" stroke-width="2.6" stroke-linejoin="round"/>
<polyline points="569.3,129.0 549.7,108.2 538.4,94.7" fill="none" stroke="#b3a6c8" stroke-width="2.6" stroke-linejoin="round"/>
<polyline points="338.9,198.9 366.0,195.0 403.0,196.9" fill="none" stroke="#f1e9f4" stroke-width="1.1" stroke-linejoin="round"/>
<polyline points="92.2,346.0 73.5,368.3 73.5,396.0 60.0,420.0 40.0,445.0" fill="none" stroke="#f1e9f4" stroke-width="1.1" stroke-linejoin="round"/>
<polyline points="119.6,378.6 100.0,400.0 95.0,430.0 98.6,436.0" fill="none" stroke="#f1e9f4" stroke-width="1.1" stroke-linejoin="round"/>
<polyline points="150.0,418.0 130.0,430.0 110.0,440.0" fill="none" stroke="#f1e9f4" stroke-width="1.1" stroke-linejoin="round"/>
<polyline points="403.0,196.9 420.0,198.0 437.5,204.3" fill="none" stroke="#f1e9f4" stroke-width="1.1" stroke-linejoin="round"/>
<polyline points="462.4,281.5 471.0,275.6" fill="none" stroke="#f1e9f4" stroke-width="1.1" stroke-linejoin="round"/>
<polyline points="285.8,24.8 313.6,29.0 359.0,30.0" fill="none" stroke="#f1e9f4" stroke-width="1.1" stroke-linejoin="round"/>
<polyline points="284.0,75.8 322.0,77.5 359.0,84.0 382.7,86.0" fill="none" stroke="#f1e9f4" stroke-width="1.1" stroke-linejoin="round"/>
<polyline points="349.0,0.0 359.0,20.0" fill="none" stroke="#f1e9f4" stroke-width="1.1" stroke-linejoin="round"/>
<polyline points="667.4,33.7 677.5,47.2 704.4,64.0" fill="none" stroke="#f1e9f4" stroke-width="1.1" stroke-linejoin="round"/>
<polyline points="626.0,74.2 658.0,68.3 704.4,64.0" fill="none" stroke="#f1e9f4" stroke-width="1.1" stroke-linejoin="round"/>
<polyline points="352.4,188.0 356.9,173.6 362.5,150.0" fill="none" stroke="#f1e9f4" stroke-width="1.1" stroke-linejoin="round"/>
<polyline points="316.5,227.0 315.0,240.0 307.0,258.0 306.0,265.0" fill="none" stroke="#f1e9f4" stroke-width="1.1" stroke-linejoin="round"/>
<polyline points="406.0,150.0 405.5,171.0 410.0,230.0" fill="none" stroke="#f1e9f4" stroke-width="1.1" stroke-linejoin="round"/>
<polyline points="271.0,228.4 280.0,258.0 285.0,278.0 286.6,298.0" fill="none" stroke="#f1e9f4" stroke-width="1.1" stroke-linejoin="round"/>
<polyline points="543.5,257.9 598.3,269.7" fill="none" stroke="#f1e9f4" stroke-width="1.1" stroke-linejoin="round"/>
<polyline points="693.5,172.8 666.8,189.1 637.9,217.4 617.3,237.1 605.8,242.2" fill="none" stroke="#f1e9f4" stroke-width="1.1" stroke-linejoin="round"/>
<polyline points="261.3,112.4 290.0,130.0 306.8,146.6" fill="none" stroke="#f1e9f4" stroke-width="1.1" stroke-linejoin="round"/>
<polyline points="574.9,314.5 572.3,365.8" fill="none" stroke="#f1e9f4" stroke-width="1.1" stroke-linejoin="round"/>
<polyline points="519.9,187.1 535.6,170.6 547.7,181.2 582.2,199.7" fill="none" stroke="#f1e9f4" stroke-width="1.1" stroke-linejoin="round"/>
<polyline points="402.6,126.4 410.0,150.0 405.5,171.0" fill="none" stroke="#f1e9f4" stroke-width="1.1" stroke-linejoin="round"/>
<polyline points="637.9,217.4 614.3,195.8 613.4,178.7" fill="none" stroke="#f1e9f4" stroke-width="1.1" stroke-linejoin="round"/>
<polyline points="498.0,145.0 474.4,141.6 457.7,109.2" fill="none" stroke="#f1e9f4" stroke-width="1.1" stroke-linejoin="round"/>
<polyline points="569.3,129.0 549.7,108.2 538.4,94.7" fill="none" stroke="#f1e9f4" stroke-width="1.1" stroke-linejoin="round"/>
<polyline points="0.0,5.0 6.7,3.4 47.0,2.5 76.0,0.0 84.0,9.3 101.0,12.6 123.0,17.7 168.5,16.9 185.0,12.6 195.5,10.0 219.0,12.6 240.0,13.5 250.4,10.4" fill="none" stroke="#ab9bc5" stroke-width="4.2" stroke-linejoin="round" stroke-linecap="round"/>
<polyline points="250.4,10.4 310.0,16.0 357.4,23.6 365.0,26.6 374.0,22.0 409.7,10.0 433.0,0.0" fill="none" stroke="#ab9bc5" stroke-width="4.2" stroke-linejoin="round" stroke-linecap="round"/>
<polyline points="365.0,26.6 372.6,28.7 399.5,38.0 471.0,40.5 487.3,43.0 519.0,47.0 546.8,40.5 573.0,34.6 594.0,36.7 605.8,50.6 639.5,54.0 662.3,43.0 688.4,16.9 711.0,5.0" fill="none" stroke="#ab9bc5" stroke-width="4.2" stroke-linejoin="round" stroke-linecap="round"/>
<polyline points="169.4,21.0 170.0,37.0 177.0,47.0 177.0,59.0 176.0,81.0 176.0,118.0 172.0,133.0 178.0,150.0 182.0,173.6 181.2,200.6 192.0,218.0 183.7,234.3 181.2,257.0 175.3,271.4 166.0,296.0 146.0,321.4 129.8,341.0 119.6,378.6" fill="none" stroke="#ab9bc5" stroke-width="4.2" stroke-linejoin="round" stroke-linecap="round"/>
<polyline points="0.0,141.6 33.7,138.0 57.3,140.7 114.6,139.0 121.4,134.8 140.0,129.8 172.0,132.0 240.0,131.5 256.0,135.7 281.6,134.8 306.8,146.6 309.4,156.4 340.0,150.0 372.6,143.3" fill="none" stroke="#ab9bc5" stroke-width="4.2" stroke-linejoin="round" stroke-linecap="round"/>
<polyline points="192.0,218.0 209.0,207.3 240.0,205.6 263.0,197.2 290.0,172.0 309.4,156.4" fill="none" stroke="#ab9bc5" stroke-width="4.2" stroke-linejoin="round" stroke-linecap="round"/>
<polyline points="372.6,143.3 403.0,126.4 457.7,109.2 490.9,110.4 521.6,116.3 532.5,116.0 569.3,129.0 602.5,123.5 630.3,111.2 651.3,112.0 675.0,120.5 711.0,114.6 745.0,112.0" fill="none" stroke="#ab9bc5" stroke-width="4.2" stroke-linejoin="round" stroke-linecap="round"/>
<polyline points="365.0,26.6 359.0,29.5 340.6,38.8 315.0,55.6 295.0,70.8 284.0,75.8 252.0,79.2 215.4,110.7 172.0,133.0" fill="none" stroke="#ab9bc5" stroke-width="4.2" stroke-linejoin="round" stroke-linecap="round"/>
<polyline points="256.0,15.0 256.0,77.5 253.0,94.4 260.5,101.0 261.3,112.4 260.5,128.0 256.0,135.7" fill="none" stroke="#ab9bc5" stroke-width="4.2" stroke-linejoin="round" stroke-linecap="round"/>
<polyline points="365.0,26.6 360.8,33.7 382.7,70.8 383.5,86.0 377.6,109.6 372.6,143.3 376.0,150.0 376.8,186.2 370.9,215.7 365.8,233.0 360.0,251.0 359.0,290.0 373.8,302.7" fill="none" stroke="#ab9bc5" stroke-width="4.2" stroke-linejoin="round" stroke-linecap="round"/>
<polyline points="0.0,269.7 16.9,259.6 40.5,247.8 67.4,234.3 94.4,227.5 113.0,228.4 134.8,230.0 160.0,220.8 175.3,217.4 192.0,218.0 209.0,220.8 240.0,227.5 245.3,227.2 271.0,228.4 285.0,223.8 301.8,226.4 316.5,227.0 348.1,233.0 365.8,233.1 406.3,231.4 437.5,204.3 456.5,194.7 471.0,190.5 519.9,187.1 533.4,190.5 582.2,199.7 592.4,192.0 613.4,178.7 650.0,160.0 693.5,172.8" fill="none" stroke="#ab9bc5" stroke-width="4.2" stroke-linejoin="round" stroke-linecap="round"/>
<polyline points="0.0,269.7 5.0,273.0 47.2,277.3 101.0,290.0 114.6,290.0 128.0,300.0 146.0,321.4 155.4,317.0 211.8,310.2 229.0,312.8 245.6,309.5 261.6,302.0 286.0,298.8 318.0,297.8 341.7,291.4 359.9,289.6 373.8,302.7 397.0,291.4 427.0,285.4 441.7,278.0 471.0,279.8 525.0,291.6 565.4,298.3 593.2,294.4" fill="none" stroke="#ab9bc5" stroke-width="4.2" stroke-linejoin="round" stroke-linecap="round"/>
<polyline points="192.0,218.0 200.6,241.0 210.7,264.6 224.2,283.0 225.9,300.0 229.0,312.8" fill="none" stroke="#ab9bc5" stroke-width="4.2" stroke-linejoin="round" stroke-linecap="round"/>
<polyline points="192.0,218.0 195.5,191.3 217.4,150.0 225.0,130.0 233.0,118.0" fill="none" stroke="#ab9bc5" stroke-width="4.2" stroke-linejoin="round" stroke-linecap="round"/>
<polyline points="146.0,321.4 148.6,334.2 170.8,368.3 163.0,380.3 164.8,411.0 172.5,424.7" fill="none" stroke="#ab9bc5" stroke-width="4.2" stroke-linejoin="round" stroke-linecap="round"/>
<polyline points="84.3,150.0 96.0,162.6 124.7,173.6 145.8,182.0 161.8,192.0 175.3,214.0 192.0,218.0" fill="none" stroke="#ab9bc5" stroke-width="4.2" stroke-linejoin="round" stroke-linecap="round"/>
<polyline points="271.0,228.4 289.5,251.6 306.0,265.0 318.6,288.2" fill="none" stroke="#ab9bc5" stroke-width="4.2" stroke-linejoin="round" stroke-linecap="round"/>
<polyline points="406.3,231.4 389.4,264.6 380.2,289.9 373.8,302.7" fill="none" stroke="#ab9bc5" stroke-width="4.2" stroke-linejoin="round" stroke-linecap="round"/>
<polyline points="487.3,43.0 481.0,58.5 466.6,83.0 457.7,109.2 453.5,150.0 455.2,173.6 456.5,194.7 469.5,232.6 456.9,259.6 433.3,274.7 421.5,284.0" fill="none" stroke="#ab9bc5" stroke-width="4.2" stroke-linejoin="round" stroke-linecap="round"/>
<polyline points="516.5,0.0 519.0,47.0 526.6,79.2 524.0,99.4 532.5,116.0 508.0,141.6 498.0,145.0 504.7,150.0 511.5,173.6 519.9,187.1 526.6,198.9 539.3,224.2 543.5,257.9 550.2,279.0 565.4,300.0 573.5,317.0 577.0,346.0 570.0,368.0 578.6,393.6 590.6,418.0 595.7,419.6 631.6,419.6" fill="none" stroke="#ab9bc5" stroke-width="4.2" stroke-linejoin="round" stroke-linecap="round"/>
<polyline points="532.5,116.0 572.0,94.4 609.0,82.6 639.5,64.0 662.3,43.0 681.7,13.5 690.0,0.0" fill="none" stroke="#ab9bc5" stroke-width="4.2" stroke-linejoin="round" stroke-linecap="round"/>
<polyline points="594.0,0.0 594.0,36.7 605.8,55.6 609.0,82.6 615.0,97.8 615.0,140.0 613.4,178.7 637.9,217.4" fill="none" stroke="#ab9bc5" stroke-width="4.2" stroke-linejoin="round" stroke-linecap="round"/>
<polyline points="704.4,64.0 666.5,115.5 615.0,140.0 573.8,152.0 538.4,171.9 519.9,187.1 509.8,207.3 491.2,224.2 469.5,232.6" fill="none" stroke="#ab9bc5" stroke-width="4.2" stroke-linejoin="round" stroke-linecap="round"/>
<polyline points="716.9,17.7 704.4,64.0 705.0,72.5 690.0,110.0 675.0,135.0 660.0,160.0 640.0,185.0 622.7,205.6 611.0,234.3 605.8,242.2 595.7,268.0 593.2,294.4 604.2,310.2 619.6,351.0 633.3,395.7 635.0,423.0 631.6,431.9" fill="none" stroke="#ab9bc5" stroke-width="4.2" stroke-linejoin="round" stroke-linecap="round"/>
<polyline points="539.3,224.2 572.0,229.2 605.8,242.2" fill="none" stroke="#ab9bc5" stroke-width="4.2" stroke-linejoin="round" stroke-linecap="round"/>
<polyline points="408.0,79.2 471.0,65.7 481.0,58.5" fill="none" stroke="#ab9bc5" stroke-width="4.2" stroke-linejoin="round" stroke-linecap="round"/>
<polyline points="399.5,38.0 397.8,57.3 392.8,84.3 383.5,86.0" fill="none" stroke="#ab9bc5" stroke-width="4.2" stroke-linejoin="round" stroke-linecap="round"/>
<polyline points="372.6,143.3 405.5,171.0 456.5,194.7" fill="none" stroke="#ab9bc5" stroke-width="4.2" stroke-linejoin="round" stroke-linecap="round"/>
<polyline points="572.3,365.8 601.7,351.2 620.0,366.6" fill="none" stroke="#ab9bc5" stroke-width="4.2" stroke-linejoin="round" stroke-linecap="round"/>
<polyline points="577.0,346.0 601.7,351.2 626.8,387.1 631.6,431.9" fill="none" stroke="#ab9bc5" stroke-width="4.2" stroke-linejoin="round" stroke-linecap="round"/>
<polyline points="716.9,17.7 727.0,4.2 740.0,0.0" fill="none" stroke="#ab9bc5" stroke-width="4.2" stroke-linejoin="round" stroke-linecap="round"/>
<polyline points="437.0,0.0 437.0,48.9 438.3,94.4 442.2,96.0" fill="none" stroke="#ab9bc5" stroke-width="4.2" stroke-linejoin="round" stroke-linecap="round"/>
<polyline points="487.3,43.0 481.0,58.5 466.6,83.0 457.7,109.2" fill="none" stroke="#ab9bc5" stroke-width="4.2" stroke-linejoin="round" stroke-linecap="round"/>
<polyline points="408.0,79.2 441.7,96.0 457.7,109.2" fill="none" stroke="#ab9bc5" stroke-width="4.2" stroke-linejoin="round" stroke-linecap="round"/>
<polyline points="481.0,0.0 483.6,33.7 481.0,58.5 471.0,65.7" fill="none" stroke="#ab9bc5" stroke-width="4.2" stroke-linejoin="round" stroke-linecap="round"/>
<polyline points="517.9,9.8 487.3,43.0" fill="none" stroke="#ab9bc5" stroke-width="4.2" stroke-linejoin="round" stroke-linecap="round"/>
<polyline points="372.6,0.0 365.0,26.6" fill="none" stroke="#ab9bc5" stroke-width="4.2" stroke-linejoin="round" stroke-linecap="round"/>
<polyline points="207.3,34.9 232.0,27.5 244.6,17.0 250.4,10.4" fill="none" stroke="#ab9bc5" stroke-width="4.2" stroke-linejoin="round" stroke-linecap="round"/>
<polyline points="704.4,64.0 742.2,91.0" fill="none" stroke="#ab9bc5" stroke-width="4.2" stroke-linejoin="round" stroke-linecap="round"/>
<polyline points="462.0,157.0 461.0,140.0 457.7,109.2" fill="none" stroke="#ab9bc5" stroke-width="4.2" stroke-linejoin="round" stroke-linecap="round"/>
<polyline points="498.0,145.0 532.5,116.0" fill="none" stroke="#ab9bc5" stroke-width="4.2" stroke-linejoin="round" stroke-linecap="round"/>
<polyline points="569.3,129.0 613.4,178.7" fill="none" stroke="#ab9bc5" stroke-width="4.2" stroke-linejoin="round" stroke-linecap="round"/>
<polyline points="309.4,156.4 318.0,173.0 343.0,199.0 366.0,195.0" fill="none" stroke="#ab9bc5" stroke-width="4.2" stroke-linejoin="round" stroke-linecap="round"/>
<polyline points="0.0,5.0 6.7,3.4 47.0,2.5 76.0,0.0 84.0,9.3 101.0,12.6 123.0,17.7 168.5,16.9 185.0,12.6 195.5,10.0 219.0,12.6 240.0,13.5 250.4,10.4" fill="none" stroke="#c9b7e0" stroke-width="2.4" stroke-linejoin="round" stroke-linecap="round"/>
<polyline points="250.4,10.4 310.0,16.0 357.4,23.6 365.0,26.6 374.0,22.0 409.7,10.0 433.0,0.0" fill="none" stroke="#c9b7e0" stroke-width="2.4" stroke-linejoin="round" stroke-linecap="round"/>
<polyline points="365.0,26.6 372.6,28.7 399.5,38.0 471.0,40.5 487.3,43.0 519.0,47.0 546.8,40.5 573.0,34.6 594.0,36.7 605.8,50.6 639.5,54.0 662.3,43.0 688.4,16.9 711.0,5.0" fill="none" stroke="#c9b7e0" stroke-width="2.4" stroke-linejoin="round" stroke-linecap="round"/>
<polyline points="169.4,21.0 170.0,37.0 177.0,47.0 177.0,59.0 176.0,81.0 176.0,118.0 172.0,133.0 178.0,150.0 182.0,173.6 181.2,200.6 192.0,218.0 183.7,234.3 181.2,257.0 175.3,271.4 166.0,296.0 146.0,321.4 129.8,341.0 119.6,378.6" fill="none" stroke="#c9b7e0" stroke-width="2.4" stroke-linejoin="round" stroke-linecap="round"/>
<polyline points="0.0,141.6 33.7,138.0 57.3,140.7 114.6,139.0 121.4,134.8 140.0,129.8 172.0,132.0 240.0,131.5 256.0,135.7 281.6,134.8 306.8,146.6 309.4,156.4 340.0,150.0 372.6,143.3" fill="none" stroke="#c9b7e0" stroke-width="2.4" stroke-linejoin="round" stroke-linecap="round"/>
<polyline points="192.0,218.0 209.0,207.3 240.0,205.6 263.0,197.2 290.0,172.0 309.4,156.4" fill="none" stroke="#c9b7e0" stroke-width="2.4" stroke-linejoin="round" stroke-linecap="round"/>
<polyline points="372.6,143.3 403.0,126.4 457.7,109.2 490.9,110.4 521.6,116.3 532.5,116.0 569.3,129.0 602.5,123.5 630.3,111.2 651.3,112.0 675.0,120.5 711.0,114.6 745.0,112.0" fill="none" stroke="#c9b7e0" stroke-width="2.4" stroke-linejoin="round" stroke-linecap="round"/>
<polyline points="365.0,26.6 359.0,29.5 340.6,38.8 315.0,55.6 295.0,70.8 284.0,75.8 252.0,79.2 215.4,110.7 172.0,133.0" fill="none" stroke="#c9b7e0" stroke-width="2.4" stroke-linejoin="round" stroke-linecap="round"/>
<polyline points="256.0,15.0 256.0,77.5 253.0,94.4 260.5,101.0 261.3,112.4 260.5,128.0 256.0,135.7" fill="none" stroke="#c9b7e0" stroke-width="2.4" stroke-linejoin="round" stroke-linecap="round"/>
<polyline points="365.0,26.6 360.8,33.7 382.7,70.8 383.5,86.0 377.6,109.6 372.6,143.3 376.0,150.0 376.8,186.2 370.9,215.7 365.8,233.0 360.0,251.0 359.0,290.0 373.8,302.7" fill="none" stroke="#c9b7e0" stroke-width="2.4" stroke-linejoin="round" stroke-linecap="round"/>
<polyline points="0.0,269.7 16.9,259.6 40.5,247.8 67.4,234.3 94.4,227.5 113.0,228.4 134.8,230.0 160.0,220.8 175.3,217.4 192.0,218.0 209.0,220.8 240.0,227.5 245.3,227.2 271.0,228.4 285.0,223.8 301.8,226.4 316.5,227.0 348.1,233.0 365.8,233.1 406.3,231.4 437.5,204.3 456.5,194.7 471.0,190.5 519.9,187.1 533.4,190.5 582.2,199.7 592.4,192.0 613.4,178.7 650.0,160.0 693.5,172.8" fill="none" stroke="#c9b7e0" stroke-width="2.4" stroke-linejoin="round" stroke-linecap="round"/>
<polyline points="0.0,269.7 5.0,273.0 47.2,277.3 101.0,290.0 114.6,290.0 128.0,300.0 146.0,321.4 155.4,317.0 211.8,310.2 229.0,312.8 245.6,309.5 261.6,302.0 286.0,298.8 318.0,297.8 341.7,291.4 359.9,289.6 373.8,302.7 397.0,291.4 427.0,285.4 441.7,278.0 471.0,279.8 525.0,291.6 565.4,298.3 593.2,294.4" fill="none" stroke="#c9b7e0" stroke-width="2.4" stroke-linejoin="round" stroke-linecap="round"/>
<polyline points="192.0,218.0 200.6,241.0 210.7,264.6 224.2,283.0 225.9,300.0 229.0,312.8" fill="none" stroke="#c9b7e0" stroke-width="2.4" stroke-linejoin="round" stroke-linecap="round"/>
<polyline points="192.0,218.0 195.5,191.3 217.4,150.0 225.0,130.0 233.0,118.0" fill="none" stroke="#c9b7e0" stroke-width="2.4" stroke-linejoin="round" stroke-linecap="round"/>
<polyline points="146.0,321.4 148.6,334.2 170.8,368.3 163.0,380.3 164.8,411.0 172.5,424.7" fill="none" stroke="#c9b7e0" stroke-width="2.4" stroke-linejoin="round" stroke-linecap="round"/>
<polyline points="84.3,150.0 96.0,162.6 124.7,173.6 145.8,182.0 161.8,192.0 175.3,214.0 192.0,218.0" fill="none" stroke="#c9b7e0" stroke-width="2.4" stroke-linejoin="round" stroke-linecap="round"/>
<polyline points="271.0,228.4 289.5,251.6 306.0,265.0 318.6,288.2" fill="none" stroke="#c9b7e0" stroke-width="2.4" stroke-linejoin="round" stroke-linecap="round"/>
<polyline points="406.3,231.4 389.4,264.6 380.2,289.9 373.8,302.7" fill="none" stroke="#c9b7e0" stroke-width="2.4" stroke-linejoin="round" stroke-linecap="round"/>
<polyline points="487.3,43.0 481.0,58.5 466.6,83.0 457.7,109.2 453.5,150.0 455.2,173.6 456.5,194.7 469.5,232.6 456.9,259.6 433.3,274.7 421.5,284.0" fill="none" stroke="#c9b7e0" stroke-width="2.4" stroke-linejoin="round" stroke-linecap="round"/>
<polyline points="516.5,0.0 519.0,47.0 526.6,79.2 524.0,99.4 532.5,116.0 508.0,141.6 498.0,145.0 504.7,150.0 511.5,173.6 519.9,187.1 526.6,198.9 539.3,224.2 543.5,257.9 550.2,279.0 565.4,300.0 573.5,317.0 577.0,346.0 570.0,368.0 578.6,393.6 590.6,418.0 595.7,419.6 631.6,419.6" fill="none" stroke="#c9b7e0" stroke-width="2.4" stroke-linejoin="round" stroke-linecap="round"/>
<polyline points="532.5,116.0 572.0,94.4 609.0,82.6 639.5,64.0 662.3,43.0 681.7,13.5 690.0,0.0" fill="none" stroke="#c9b7e0" stroke-width="2.4" stroke-linejoin="round" stroke-linecap="round"/>
<polyline points="594.0,0.0 594.0,36.7 605.8,55.6 609.0,82.6 615.0,97.8 615.0,140.0 613.4,178.7 637.9,217.4" fill="none" stroke="#c9b7e0" stroke-width="2.4" stroke-linejoin="round" stroke-linecap="round"/>
<polyline points="704.4,64.0 666.5,115.5 615.0,140.0 573.8,152.0 538.4,171.9 519.9,187.1 509.8,207.3 491.2,224.2 469.5,232.6" fill="none" stroke="#c9b7e0" stroke-width="2.4" stroke-linejoin="round" stroke-linecap="round"/>
<polyline points="716.9,17.7 704.4,64.0 705.0,72.5 690.0,110.0 675.0,135.0 660.0,160.0 640.0,185.0 622.7,205.6 611.0,234.3 605.8,242.2 595.7,268.0 593.2,294.4 604.2,310.2 619.6,351.0 633.3,395.7 635.0,423.0 631.6,431.9" fill="none" stroke="#c9b7e0" stroke-width="2.4" stroke-linejoin="round" stroke-linecap="round"/>
<polyline points="539.3,224.2 572.0,229.2 605.8,242.2" fill="none" stroke="#c9b7e0" stroke-width="2.4" stroke-linejoin="round" stroke-linecap="round"/>
<polyline points="408.0,79.2 471.0,65.7 481.0,58.5" fill="none" stroke="#c9b7e0" stroke-width="2.4" stroke-linejoin="round" stroke-linecap="round"/>
<polyline points="399.5,38.0 397.8,57.3 392.8,84.3 383.5,86.0" fill="none" stroke="#c9b7e0" stroke-width="2.4" stroke-linejoin="round" stroke-linecap="round"/>
<polyline points="372.6,143.3 405.5,171.0 456.5,194.7" fill="none" stroke="#c9b7e0" stroke-width="2.4" stroke-linejoin="round" stroke-linecap="round"/>
<polyline points="572.3,365.8 601.7,351.2 620.0,366.6" fill="none" stroke="#c9b7e0" stroke-width="2.4" stroke-linejoin="round" stroke-linecap="round"/>
<polyline points="577.0,346.0 601.7,351.2 626.8,387.1 631.6,431.9" fill="none" stroke="#c9b7e0" stroke-width="2.4" stroke-linejoin="round" stroke-linecap="round"/>
<polyline points="716.9,17.7 727.0,4.2 740.0,0.0" fill="none" stroke="#c9b7e0" stroke-width="2.4" stroke-linejoin="round" stroke-linecap="round"/>
<polyline points="437.0,0.0 437.0,48.9 438.3,94.4 442.2,96.0" fill="none" stroke="#c9b7e0" stroke-width="2.4" stroke-linejoin="round" stroke-linecap="round"/>
<polyline points="487.3,43.0 481.0,58.5 466.6,83.0 457.7,109.2" fill="none" stroke="#c9b7e0" stroke-width="2.4" stroke-linejoin="round" stroke-linecap="round"/>
<polyline points="408.0,79.2 441.7,96.0 457.7,109.2" fill="none" stroke="#c9b7e0" stroke-width="2.4" stroke-linejoin="round" stroke-linecap="round"/>
<polyline points="481.0,0.0 483.6,33.7 481.0,58.5 471.0,65.7" fill="none" stroke="#c9b7e0" stroke-width="2.4" stroke-linejoin="round" stroke-linecap="round"/>
<polyline points="517.9,9.8 487.3,43.0" fill="none" stroke="#c9b7e0" stroke-width="2.4" stroke-linejoin="round" stroke-linecap="round"/>
<polyline points="372.6,0.0 365.0,26.6" fill="none" stroke="#c9b7e0" stroke-width="2.4" stroke-linejoin="round" stroke-linecap="round"/>
<polyline points="207.3,34.9 232.0,27.5 244.6,17.0 250.4,10.4" fill="none" stroke="#c9b7e0" stroke-width="2.4" stroke-linejoin="round" stroke-linecap="round"/>
<polyline points="704.4,64.0 742.2,91.0" fill="none" stroke="#c9b7e0" stroke-width="2.4" stroke-linejoin="round" stroke-linecap="round"/>
<polyline points="462.0,157.0 461.0,140.0 457.7,109.2" fill="none" stroke="#c9b7e0" stroke-width="2.4" stroke-linejoin="round" stroke-linecap="round"/>
<polyline points="498.0,145.0 532.5,116.0" fill="none" stroke="#c9b7e0" stroke-width="2.4" stroke-linejoin="round" stroke-linecap="round"/>
<polyline points="569.3,129.0 613.4,178.7" fill="none" stroke="#c9b7e0" stroke-width="2.4" stroke-linejoin="round" stroke-linecap="round"/>
<polyline points="309.4,156.4 318.0,173.0 343.0,199.0 366.0,195.0" fill="none" stroke="#c9b7e0" stroke-width="2.4" stroke-linejoin="round" stroke-linecap="round"/>
<circle cx="83.8" cy="49.4" r="2.0" fill="rgba(165,160,172,.38)" stroke="#67656b" stroke-width="1.1"/>
<circle cx="105.8" cy="56.6" r="2.0" fill="rgba(165,160,172,.38)" stroke="#67656b" stroke-width="1.1"/>
<circle cx="81.4" cy="80.6" r="2.0" fill="rgba(165,160,172,.38)" stroke="#67656b" stroke-width="1.1"/>
<circle cx="124.0" cy="18.5" r="2.0" fill="rgba(165,160,172,.38)" stroke="#67656b" stroke-width="1.1"/>
<circle cx="169.4" cy="21.0" r="2.0" fill="rgba(165,160,172,.38)" stroke="#67656b" stroke-width="1.1"/>
<circle cx="169.4" cy="36.0" r="2.0" fill="rgba(165,160,172,.38)" stroke="#67656b" stroke-width="1.1"/>
<circle cx="161.8" cy="46.0" r="2.0" fill="rgba(165,160,172,.38)" stroke="#67656b" stroke-width="1.1"/>
<circle cx="176.6" cy="59.0" r="4.5" fill="rgba(165,160,172,.38)" stroke="#67656b" stroke-width="1.1"/>
<circle cx="185.0" cy="79.6" r="2.0" fill="rgba(165,160,172,.38)" stroke="#67656b" stroke-width="1.1"/>
<circle cx="162.8" cy="101.5" r="2.0" fill="rgba(165,160,172,.38)" stroke="#67656b" stroke-width="1.1"/>
<circle cx="184.0" cy="110.7" r="2.0" fill="rgba(165,160,172,.38)" stroke="#67656b" stroke-width="1.1"/>
<circle cx="214.0" cy="90.7" r="2.0" fill="rgba(165,160,172,.38)" stroke="#67656b" stroke-width="1.1"/>
<circle cx="215.4" cy="110.7" r="5.5" fill="rgba(165,160,172,.38)" stroke="#67656b" stroke-width="1.1"/>
<circle cx="172.0" cy="133.0" r="6.5" fill="rgba(165,160,172,.38)" stroke="#67656b" stroke-width="1.1"/>
<circle cx="57.3" cy="141.2" r="3.5" fill="rgba(165,160,172,.38)" stroke="#67656b" stroke-width="1.1"/>
<circle cx="121.4" cy="134.8" r="2.0" fill="rgba(165,160,172,.38)" stroke="#67656b" stroke-width="1.1"/>
<circle cx="141.0" cy="129.8" r="2.0" fill="rgba(165,160,172,.38)" stroke="#67656b" stroke-width="1.1"/>
<circle cx="196.4" cy="8.0" r="3.0" fill="rgba(165,160,172,.38)" stroke="#67656b" stroke-width="1.1"/>
<circle cx="220.3" cy="13.5" r="3.5" fill="rgba(165,160,172,.38)" stroke="#67656b" stroke-width="1.1"/>
<circle cx="232.0" cy="16.0" r="3.0" fill="rgba(165,160,172,.38)" stroke="#67656b" stroke-width="1.1"/>
<circle cx="207.3" cy="34.5" r="2.0" fill="rgba(165,160,172,.38)" stroke="#67656b" stroke-width="1.1"/>
<circle cx="186.7" cy="135.7" r="2.0" fill="rgba(165,160,172,.38)" stroke="#67656b" stroke-width="1.1"/>
<circle cx="230.0" cy="123.4" r="2.0" fill="rgba(165,160,172,.38)" stroke="#67656b" stroke-width="1.1"/>
<circle cx="322.0" cy="8.8" r="2.0" fill="rgba(165,160,172,.38)" stroke="#67656b" stroke-width="1.1"/>
<circle cx="310.0" cy="16.0" r="3.5" fill="rgba(165,160,172,.38)" stroke="#67656b" stroke-width="1.1"/>
<circle cx="313.6" cy="29.0" r="2.5" fill="rgba(165,160,172,.38)" stroke="#67656b" stroke-width="1.1"/>
<circle cx="285.8" cy="24.8" r="2.0" fill="rgba(165,160,172,.38)" stroke="#67656b" stroke-width="1.1"/>
<circle cx="232.7" cy="16.0" r="2.5" fill="rgba(165,160,172,.38)" stroke="#67656b" stroke-width="1.1"/>
<circle cx="247.0" cy="68.3" r="2.0" fill="rgba(165,160,172,.38)" stroke="#67656b" stroke-width="1.1"/>
<circle cx="285.0" cy="93.5" r="2.0" fill="rgba(165,160,172,.38)" stroke="#67656b" stroke-width="1.1"/>
<circle cx="322.0" cy="90.7" r="2.0" fill="rgba(165,160,172,.38)" stroke="#67656b" stroke-width="1.1"/>
<circle cx="289.0" cy="106.7" r="2.0" fill="rgba(165,160,172,.38)" stroke="#67656b" stroke-width="1.1"/>
<circle cx="308.5" cy="104.0" r="2.0" fill="rgba(165,160,172,.38)" stroke="#67656b" stroke-width="1.1"/>
<circle cx="239.4" cy="118.0" r="2.0" fill="rgba(165,160,172,.38)" stroke="#67656b" stroke-width="1.1"/>
<circle cx="328.8" cy="122.5" r="2.0" fill="rgba(165,160,172,.38)" stroke="#67656b" stroke-width="1.1"/>
<circle cx="325.4" cy="139.6" r="2.0" fill="rgba(165,160,172,.38)" stroke="#67656b" stroke-width="1.1"/>
<circle cx="288.3" cy="138.5" r="2.0" fill="rgba(165,160,172,.38)" stroke="#67656b" stroke-width="1.1"/>
<circle cx="255.4" cy="135.7" r="3.5" fill="rgba(165,160,172,.38)" stroke="#67656b" stroke-width="1.1"/>
<circle cx="261.3" cy="112.4" r="5.5" fill="rgba(165,160,172,.38)" stroke="#67656b" stroke-width="1.1"/>
<circle cx="252.0" cy="79.2" r="3.0" fill="rgba(165,160,172,.38)" stroke="#67656b" stroke-width="1.1"/>
<circle cx="284.0" cy="75.8" r="3.5" fill="rgba(165,160,172,.38)" stroke="#67656b" stroke-width="1.1"/>
<circle cx="301.0" cy="59.5" r="2.0" fill="rgba(165,160,172,.38)" stroke="#67656b" stroke-width="1.1"/>
<circle cx="315.3" cy="56.5" r="2.0" fill="rgba(165,160,172,.38)" stroke="#67656b" stroke-width="1.1"/>
<circle cx="360.4" cy="55.6" r="2.0" fill="rgba(165,160,172,.38)" stroke="#67656b" stroke-width="1.1"/>
<circle cx="392.3" cy="57.8" r="2.5" fill="rgba(165,160,172,.38)" stroke="#67656b" stroke-width="1.1"/>
<circle cx="399.9" cy="57.3" r="2.0" fill="rgba(165,160,172,.38)" stroke="#67656b" stroke-width="1.1"/>
<circle cx="383.5" cy="71.6" r="2.5" fill="rgba(165,160,172,.38)" stroke="#67656b" stroke-width="1.1"/>
<circle cx="382.7" cy="86.0" r="2.0" fill="rgba(165,160,172,.38)" stroke="#67656b" stroke-width="1.1"/>
<circle cx="408.0" cy="79.6" r="2.0" fill="rgba(165,160,172,.38)" stroke="#67656b" stroke-width="1.1"/>
<circle cx="416.4" cy="94.7" r="2.0" fill="rgba(165,160,172,.38)" stroke="#67656b" stroke-width="1.1"/>
<circle cx="397.0" cy="100.8" r="2.0" fill="rgba(165,160,172,.38)" stroke="#67656b" stroke-width="1.1"/>
<circle cx="402.4" cy="103.7" r="2.0" fill="rgba(165,160,172,.38)" stroke="#67656b" stroke-width="1.1"/>
<circle cx="417.0" cy="105.3" r="2.0" fill="rgba(165,160,172,.38)" stroke="#67656b" stroke-width="1.1"/>
<circle cx="370.6" cy="106.7" r="2.0" fill="rgba(165,160,172,.38)" stroke="#67656b" stroke-width="1.1"/>
<circle cx="358.3" cy="113.0" r="2.0" fill="rgba(165,160,172,.38)" stroke="#67656b" stroke-width="1.1"/>
<circle cx="354.0" cy="120.5" r="3.5" fill="rgba(165,160,172,.38)" stroke="#67656b" stroke-width="1.1"/>
<circle cx="374.6" cy="117.0" r="2.0" fill="rgba(165,160,172,.38)" stroke="#67656b" stroke-width="1.1"/>
<circle cx="388.0" cy="113.3" r="2.0" fill="rgba(165,160,172,.38)" stroke="#67656b" stroke-width="1.1"/>
<circle cx="402.6" cy="126.4" r="2.5" fill="rgba(165,160,172,.38)" stroke="#67656b" stroke-width="1.1"/>
<circle cx="410.2" cy="10.5" r="2.0" fill="rgba(165,160,172,.38)" stroke="#67656b" stroke-width="1.1"/>
<circle cx="400.4" cy="38.0" r="2.0" fill="rgba(165,160,172,.38)" stroke="#67656b" stroke-width="1.1"/>
<circle cx="437.5" cy="25.8" r="2.0" fill="rgba(165,160,172,.38)" stroke="#67656b" stroke-width="1.1"/>
<circle cx="447.3" cy="26.0" r="2.0" fill="rgba(165,160,172,.38)" stroke="#67656b" stroke-width="1.1"/>
<circle cx="453.0" cy="35.0" r="2.0" fill="rgba(165,160,172,.38)" stroke="#67656b" stroke-width="1.1"/>
<circle cx="464.0" cy="8.8" r="3.5" fill="rgba(165,160,172,.38)" stroke="#67656b" stroke-width="1.1"/>
<circle cx="465.0" cy="19.4" r="2.0" fill="rgba(165,160,172,.38)" stroke="#67656b" stroke-width="1.1"/>
<circle cx="437.0" cy="48.9" r="3.5" fill="rgba(165,160,172,.38)" stroke="#67656b" stroke-width="1.1"/>
<circle cx="448.4" cy="56.5" r="3.0" fill="rgba(165,160,172,.38)" stroke="#67656b" stroke-width="1.1"/>
<circle cx="438.0" cy="70.8" r="2.0" fill="rgba(165,160,172,.38)" stroke="#67656b" stroke-width="1.1"/>
<circle cx="466.6" cy="83.0" r="3.5" fill="rgba(165,160,172,.38)" stroke="#67656b" stroke-width="1.1"/>
<circle cx="463.3" cy="91.5" r="2.0" fill="rgba(165,160,172,.38)" stroke="#67656b" stroke-width="1.1"/>
<circle cx="442.2" cy="96.0" r="4.5" fill="rgba(165,160,172,.38)" stroke="#67656b" stroke-width="1.1"/>
<circle cx="457.7" cy="109.2" r="8.0" fill="rgba(165,160,172,.38)" stroke="#67656b" stroke-width="1.1"/>
<circle cx="456.9" cy="133.0" r="2.0" fill="rgba(165,160,172,.38)" stroke="#67656b" stroke-width="1.1"/>
<circle cx="466.0" cy="131.5" r="2.0" fill="rgba(165,160,172,.38)" stroke="#67656b" stroke-width="1.1"/>
<circle cx="442.5" cy="139.6" r="2.0" fill="rgba(165,160,172,.38)" stroke="#67656b" stroke-width="1.1"/>
<circle cx="463.0" cy="143.0" r="2.0" fill="rgba(165,160,172,.38)" stroke="#67656b" stroke-width="1.1"/>
<circle cx="307.0" cy="0.8" r="2.0" fill="rgba(165,160,172,.38)" stroke="#67656b" stroke-width="1.1"/>
<circle cx="365.0" cy="26.6" r="6.5" fill="rgba(165,160,172,.38)" stroke="#67656b" stroke-width="1.1"/>
<circle cx="517.9" cy="9.8" r="6.5" fill="rgba(165,160,172,.38)" stroke="#67656b" stroke-width="1.1"/>
<circle cx="480.3" cy="7.6" r="2.5" fill="rgba(165,160,172,.38)" stroke="#67656b" stroke-width="1.1"/>
<circle cx="481.0" cy="16.3" r="2.0" fill="rgba(165,160,172,.38)" stroke="#67656b" stroke-width="1.1"/>
<circle cx="491.2" cy="2.5" r="2.0" fill="rgba(165,160,172,.38)" stroke="#67656b" stroke-width="1.1"/>
<circle cx="493.8" cy="22.8" r="2.0" fill="rgba(165,160,172,.38)" stroke="#67656b" stroke-width="1.1"/>
<circle cx="487.3" cy="43.0" r="6.0" fill="rgba(165,160,172,.38)" stroke="#67656b" stroke-width="1.1"/>
<circle cx="508.0" cy="42.0" r="2.0" fill="rgba(165,160,172,.38)" stroke="#67656b" stroke-width="1.1"/>
<circle cx="519.0" cy="46.9" r="4.5" fill="rgba(165,160,172,.38)" stroke="#67656b" stroke-width="1.1"/>
<circle cx="532.5" cy="46.4" r="2.0" fill="rgba(165,160,172,.38)" stroke="#67656b" stroke-width="1.1"/>
<circle cx="523.2" cy="57.6" r="2.0" fill="rgba(165,160,172,.38)" stroke="#67656b" stroke-width="1.1"/>
<circle cx="481.0" cy="58.5" r="3.5" fill="rgba(165,160,172,.38)" stroke="#67656b" stroke-width="1.1"/>
<circle cx="510.6" cy="60.3" r="2.0" fill="rgba(165,160,172,.38)" stroke="#67656b" stroke-width="1.1"/>
<circle cx="495.4" cy="70.0" r="2.0" fill="rgba(165,160,172,.38)" stroke="#67656b" stroke-width="1.1"/>
<circle cx="514.8" cy="79.2" r="2.0" fill="rgba(165,160,172,.38)" stroke="#67656b" stroke-width="1.1"/>
<circle cx="480.3" cy="82.0" r="2.0" fill="rgba(165,160,172,.38)" stroke="#67656b" stroke-width="1.1"/>
<circle cx="538.4" cy="94.7" r="2.0" fill="rgba(165,160,172,.38)" stroke="#67656b" stroke-width="1.1"/>
<circle cx="569.6" cy="97.4" r="3.0" fill="rgba(165,160,172,.38)" stroke="#67656b" stroke-width="1.1"/>
<circle cx="574.2" cy="103.7" r="3.5" fill="rgba(165,160,172,.38)" stroke="#67656b" stroke-width="1.1"/>
<circle cx="549.7" cy="108.2" r="3.0" fill="rgba(165,160,172,.38)" stroke="#67656b" stroke-width="1.1"/>
<circle cx="562.0" cy="109.6" r="2.0" fill="rgba(165,160,172,.38)" stroke="#67656b" stroke-width="1.1"/>
<circle cx="532.5" cy="116.0" r="6.0" fill="rgba(165,160,172,.38)" stroke="#67656b" stroke-width="1.1"/>
<circle cx="542.6" cy="118.8" r="2.0" fill="rgba(165,160,172,.38)" stroke="#67656b" stroke-width="1.1"/>
<circle cx="490.9" cy="110.4" r="2.0" fill="rgba(165,160,172,.38)" stroke="#67656b" stroke-width="1.1"/>
<circle cx="503.9" cy="116.3" r="2.0" fill="rgba(165,160,172,.38)" stroke="#67656b" stroke-width="1.1"/>
<circle cx="483.6" cy="124.7" r="2.0" fill="rgba(165,160,172,.38)" stroke="#67656b" stroke-width="1.1"/>
<circle cx="514.8" cy="132.8" r="2.0" fill="rgba(165,160,172,.38)" stroke="#67656b" stroke-width="1.1"/>
<circle cx="498.0" cy="145.0" r="4.5" fill="rgba(165,160,172,.38)" stroke="#67656b" stroke-width="1.1"/>
<circle cx="508.0" cy="141.6" r="3.0" fill="rgba(165,160,172,.38)" stroke="#67656b" stroke-width="1.1"/>
<circle cx="474.4" cy="141.6" r="2.0" fill="rgba(165,160,172,.38)" stroke="#67656b" stroke-width="1.1"/>
<circle cx="573.0" cy="34.6" r="3.0" fill="rgba(165,160,172,.38)" stroke="#67656b" stroke-width="1.1"/>
<circle cx="594.0" cy="36.7" r="3.0" fill="rgba(165,160,172,.38)" stroke="#67656b" stroke-width="1.1"/>
<circle cx="578.9" cy="21.0" r="2.0" fill="rgba(165,160,172,.38)" stroke="#67656b" stroke-width="1.1"/>
<circle cx="557.8" cy="2.5" r="2.0" fill="rgba(165,160,172,.38)" stroke="#67656b" stroke-width="1.1"/>
<circle cx="581.4" cy="3.4" r="2.0" fill="rgba(165,160,172,.38)" stroke="#67656b" stroke-width="1.1"/>
<circle cx="596.6" cy="5.4" r="3.0" fill="rgba(165,160,172,.38)" stroke="#67656b" stroke-width="1.1"/>
<circle cx="628.6" cy="5.0" r="2.0" fill="rgba(165,160,172,.38)" stroke="#67656b" stroke-width="1.1"/>
<circle cx="605.8" cy="55.6" r="2.5" fill="rgba(165,160,172,.38)" stroke="#67656b" stroke-width="1.1"/>
<circle cx="605.0" cy="73.3" r="2.0" fill="rgba(165,160,172,.38)" stroke="#67656b" stroke-width="1.1"/>
<circle cx="626.0" cy="74.2" r="3.5" fill="rgba(165,160,172,.38)" stroke="#67656b" stroke-width="1.1"/>
<circle cx="638.4" cy="72.8" r="2.5" fill="rgba(165,160,172,.38)" stroke="#67656b" stroke-width="1.1"/>
<circle cx="658.0" cy="68.3" r="2.0" fill="rgba(165,160,172,.38)" stroke="#67656b" stroke-width="1.1"/>
<circle cx="667.4" cy="33.7" r="3.5" fill="rgba(165,160,172,.38)" stroke="#67656b" stroke-width="1.1"/>
<circle cx="662.3" cy="43.0" r="3.0" fill="rgba(165,160,172,.38)" stroke="#67656b" stroke-width="1.1"/>
<circle cx="677.5" cy="47.2" r="4.0" fill="rgba(165,160,172,.38)" stroke="#67656b" stroke-width="1.1"/>
<circle cx="686.0" cy="8.4" r="3.5" fill="rgba(165,160,172,.38)" stroke="#67656b" stroke-width="1.1"/>
<circle cx="696.9" cy="37.0" r="2.0" fill="rgba(165,160,172,.38)" stroke="#67656b" stroke-width="1.1"/>
<circle cx="704.4" cy="64.0" r="7.0" fill="rgba(165,160,172,.38)" stroke="#67656b" stroke-width="1.1"/>
<circle cx="621.0" cy="98.0" r="2.0" fill="rgba(165,160,172,.38)" stroke="#67656b" stroke-width="1.1"/>
<circle cx="641.0" cy="92.4" r="2.0" fill="rgba(165,160,172,.38)" stroke="#67656b" stroke-width="1.1"/>
<circle cx="653.0" cy="95.7" r="2.0" fill="rgba(165,160,172,.38)" stroke="#67656b" stroke-width="1.1"/>
<circle cx="679.5" cy="104.2" r="2.0" fill="rgba(165,160,172,.38)" stroke="#67656b" stroke-width="1.1"/>
<circle cx="699.7" cy="100.3" r="2.0" fill="rgba(165,160,172,.38)" stroke="#67656b" stroke-width="1.1"/>
<circle cx="593.2" cy="107.9" r="2.0" fill="rgba(165,160,172,.38)" stroke="#67656b" stroke-width="1.1"/>
<circle cx="607.2" cy="109.2" r="2.0" fill="rgba(165,160,172,.38)" stroke="#67656b" stroke-width="1.1"/>
<circle cx="630.3" cy="111.2" r="4.5" fill="rgba(165,160,172,.38)" stroke="#67656b" stroke-width="1.1"/>
<circle cx="641.7" cy="111.6" r="4.5" fill="rgba(165,160,172,.38)" stroke="#67656b" stroke-width="1.1"/>
<circle cx="651.3" cy="112.0" r="4.0" fill="rgba(165,160,172,.38)" stroke="#67656b" stroke-width="1.1"/>
<circle cx="666.5" cy="115.5" r="5.5" fill="rgba(165,160,172,.38)" stroke="#67656b" stroke-width="1.1"/>
<circle cx="675.0" cy="120.5" r="8.0" fill="rgba(165,160,172,.38)" stroke="#67656b" stroke-width="1.1"/>
<circle cx="696.0" cy="116.0" r="2.5" fill="rgba(165,160,172,.38)" stroke="#67656b" stroke-width="1.1"/>
<circle cx="602.5" cy="123.5" r="3.5" fill="rgba(165,160,172,.38)" stroke="#67656b" stroke-width="1.1"/>
<circle cx="569.3" cy="129.0" r="5.0" fill="rgba(165,160,172,.38)" stroke="#67656b" stroke-width="1.1"/>
<circle cx="584.3" cy="125.6" r="2.0" fill="rgba(165,160,172,.38)" stroke="#67656b" stroke-width="1.1"/>
<circle cx="557.8" cy="131.8" r="2.0" fill="rgba(165,160,172,.38)" stroke="#67656b" stroke-width="1.1"/>
<circle cx="615.1" cy="140.0" r="10.0" fill="rgba(165,160,172,.38)" stroke="#67656b" stroke-width="1.1"/>
<circle cx="587.3" cy="136.5" r="2.0" fill="rgba(165,160,172,.38)" stroke="#67656b" stroke-width="1.1"/>
<circle cx="596.6" cy="138.2" r="2.0" fill="rgba(165,160,172,.38)" stroke="#67656b" stroke-width="1.1"/>
<circle cx="564.9" cy="139.6" r="2.0" fill="rgba(165,160,172,.38)" stroke="#67656b" stroke-width="1.1"/>
<circle cx="593.2" cy="145.0" r="2.0" fill="rgba(165,160,172,.38)" stroke="#67656b" stroke-width="1.1"/>
<circle cx="632.0" cy="135.7" r="2.0" fill="rgba(165,160,172,.38)" stroke="#67656b" stroke-width="1.1"/>
<circle cx="651.3" cy="141.6" r="2.0" fill="rgba(165,160,172,.38)" stroke="#67656b" stroke-width="1.1"/>
<circle cx="664.8" cy="144.0" r="4.0" fill="rgba(165,160,172,.38)" stroke="#67656b" stroke-width="1.1"/>
<circle cx="691.0" cy="134.8" r="2.5" fill="rgba(165,160,172,.38)" stroke="#67656b" stroke-width="1.1"/>
<circle cx="701.0" cy="138.5" r="2.0" fill="rgba(165,160,172,.38)" stroke="#67656b" stroke-width="1.1"/>
<circle cx="659.0" cy="131.5" r="2.0" fill="rgba(165,160,172,.38)" stroke="#67656b" stroke-width="1.1"/>
<circle cx="716.9" cy="17.7" r="10.5" fill="rgba(165,160,172,.38)" stroke="#67656b" stroke-width="1.1"/>
<circle cx="727.0" cy="4.2" r="7.0" fill="rgba(165,160,172,.38)" stroke="#67656b" stroke-width="1.1"/>
<circle cx="756.2" cy="8.8" r="4.0" fill="rgba(165,160,172,.38)" stroke="#67656b" stroke-width="1.1"/>
<circle cx="780.4" cy="5.6" r="3.5" fill="rgba(165,160,172,.38)" stroke="#67656b" stroke-width="1.1"/>
<circle cx="784.6" cy="2.0" r="3.0" fill="rgba(165,160,172,.38)" stroke="#67656b" stroke-width="1.1"/>
<circle cx="741.3" cy="21.9" r="2.0" fill="rgba(165,160,172,.38)" stroke="#67656b" stroke-width="1.1"/>
<circle cx="741.3" cy="30.0" r="2.0" fill="rgba(165,160,172,.38)" stroke="#67656b" stroke-width="1.1"/>
<circle cx="754.5" cy="35.7" r="5.5" fill="rgba(165,160,172,.38)" stroke="#67656b" stroke-width="1.1"/>
<circle cx="766.3" cy="35.4" r="2.0" fill="rgba(165,160,172,.38)" stroke="#67656b" stroke-width="1.1"/>
<circle cx="730.4" cy="38.4" r="3.0" fill="rgba(165,160,172,.38)" stroke="#67656b" stroke-width="1.1"/>
<circle cx="742.2" cy="91.0" r="6.0" fill="rgba(165,160,172,.38)" stroke="#67656b" stroke-width="1.1"/>
<circle cx="737.1" cy="105.3" r="2.0" fill="rgba(165,160,172,.38)" stroke="#67656b" stroke-width="1.1"/>
<circle cx="752.3" cy="114.6" r="2.0" fill="rgba(165,160,172,.38)" stroke="#67656b" stroke-width="1.1"/>
<circle cx="715.2" cy="144.0" r="2.5" fill="rgba(165,160,172,.38)" stroke="#67656b" stroke-width="1.1"/>
<circle cx="42.5" cy="153.4" r="2.0" fill="rgba(165,160,172,.38)" stroke="#67656b" stroke-width="1.1"/>
<circle cx="21.4" cy="165.7" r="2.0" fill="rgba(165,160,172,.38)" stroke="#67656b" stroke-width="1.1"/>
<circle cx="60.7" cy="173.6" r="2.0" fill="rgba(165,160,172,.38)" stroke="#67656b" stroke-width="1.1"/>
<circle cx="56.1" cy="193.8" r="4.5" fill="rgba(165,160,172,.38)" stroke="#67656b" stroke-width="1.1"/>
<circle cx="22.4" cy="220.3" r="2.0" fill="rgba(165,160,172,.38)" stroke="#67656b" stroke-width="1.1"/>
<circle cx="38.4" cy="233.0" r="2.0" fill="rgba(165,160,172,.38)" stroke="#67656b" stroke-width="1.1"/>
<circle cx="50.0" cy="242.4" r="3.5" fill="rgba(165,160,172,.38)" stroke="#67656b" stroke-width="1.1"/>
<circle cx="44.2" cy="247.0" r="3.5" fill="rgba(165,160,172,.38)" stroke="#67656b" stroke-width="1.1"/>
<circle cx="67.0" cy="235.6" r="2.0" fill="rgba(165,160,172,.38)" stroke="#67656b" stroke-width="1.1"/>
<circle cx="95.6" cy="228.4" r="2.0" fill="rgba(165,160,172,.38)" stroke="#67656b" stroke-width="1.1"/>
<circle cx="113.3" cy="228.7" r="3.5" fill="rgba(165,160,172,.38)" stroke="#67656b" stroke-width="1.1"/>
<circle cx="94.4" cy="260.4" r="3.0" fill="rgba(165,160,172,.38)" stroke="#67656b" stroke-width="1.1"/>
<circle cx="125.0" cy="175.0" r="2.0" fill="rgba(165,160,172,.38)" stroke="#67656b" stroke-width="1.1"/>
<circle cx="145.5" cy="182.9" r="3.0" fill="rgba(165,160,172,.38)" stroke="#67656b" stroke-width="1.1"/>
<circle cx="148.3" cy="160.0" r="3.0" fill="rgba(165,160,172,.38)" stroke="#67656b" stroke-width="1.1"/>
<circle cx="161.5" cy="162.3" r="2.0" fill="rgba(165,160,172,.38)" stroke="#67656b" stroke-width="1.1"/>
<circle cx="182.5" cy="173.6" r="2.0" fill="rgba(165,160,172,.38)" stroke="#67656b" stroke-width="1.1"/>
<circle cx="182.0" cy="191.3" r="2.0" fill="rgba(165,160,172,.38)" stroke="#67656b" stroke-width="1.1"/>
<circle cx="195.9" cy="191.6" r="3.5" fill="rgba(165,160,172,.38)" stroke="#67656b" stroke-width="1.1"/>
<circle cx="207.6" cy="193.0" r="2.0" fill="rgba(165,160,172,.38)" stroke="#67656b" stroke-width="1.1"/>
<circle cx="224.7" cy="190.5" r="2.0" fill="rgba(165,160,172,.38)" stroke="#67656b" stroke-width="1.1"/>
<circle cx="157.3" cy="217.4" r="2.0" fill="rgba(165,160,172,.38)" stroke="#67656b" stroke-width="1.1"/>
<circle cx="165.5" cy="228.9" r="2.0" fill="rgba(165,160,172,.38)" stroke="#67656b" stroke-width="1.1"/>
<circle cx="153.4" cy="236.3" r="2.0" fill="rgba(165,160,172,.38)" stroke="#67656b" stroke-width="1.1"/>
<circle cx="223.0" cy="207.3" r="2.0" fill="rgba(165,160,172,.38)" stroke="#67656b" stroke-width="1.1"/>
<circle cx="231.0" cy="233.0" r="3.5" fill="rgba(165,160,172,.38)" stroke="#67656b" stroke-width="1.1"/>
<circle cx="217.0" cy="236.8" r="2.0" fill="rgba(165,160,172,.38)" stroke="#67656b" stroke-width="1.1"/>
<circle cx="232.0" cy="244.0" r="2.0" fill="rgba(165,160,172,.38)" stroke="#67656b" stroke-width="1.1"/>
<circle cx="222.1" cy="250.8" r="2.0" fill="rgba(165,160,172,.38)" stroke="#67656b" stroke-width="1.1"/>
<circle cx="200.2" cy="240.5" r="2.0" fill="rgba(165,160,172,.38)" stroke="#67656b" stroke-width="1.1"/>
<circle cx="180.9" cy="256.7" r="3.5" fill="rgba(165,160,172,.38)" stroke="#67656b" stroke-width="1.1"/>
<circle cx="133.2" cy="252.0" r="2.0" fill="rgba(165,160,172,.38)" stroke="#67656b" stroke-width="1.1"/>
<circle cx="166.5" cy="271.4" r="5.0" fill="rgba(165,160,172,.38)" stroke="#67656b" stroke-width="1.1"/>
<circle cx="204.8" cy="286.5" r="4.0" fill="rgba(165,160,172,.38)" stroke="#67656b" stroke-width="1.1"/>
<circle cx="224.2" cy="283.5" r="2.0" fill="rgba(165,160,172,.38)" stroke="#67656b" stroke-width="1.1"/>
<circle cx="136.2" cy="296.6" r="2.0" fill="rgba(165,160,172,.38)" stroke="#67656b" stroke-width="1.1"/>
<circle cx="309.4" cy="156.4" r="4.5" fill="rgba(165,160,172,.38)" stroke="#67656b" stroke-width="1.1"/>
<circle cx="318.1" cy="173.1" r="2.5" fill="rgba(165,160,172,.38)" stroke="#67656b" stroke-width="1.1"/>
<circle cx="263.0" cy="197.2" r="2.5" fill="rgba(165,160,172,.38)" stroke="#67656b" stroke-width="1.1"/>
<circle cx="239.8" cy="206.5" r="2.0" fill="rgba(165,160,172,.38)" stroke="#67656b" stroke-width="1.1"/>
<circle cx="296.2" cy="193.5" r="2.0" fill="rgba(165,160,172,.38)" stroke="#67656b" stroke-width="1.1"/>
<circle cx="286.1" cy="202.8" r="2.0" fill="rgba(165,160,172,.38)" stroke="#67656b" stroke-width="1.1"/>
<circle cx="301.0" cy="204.4" r="2.0" fill="rgba(165,160,172,.38)" stroke="#67656b" stroke-width="1.1"/>
<circle cx="245.3" cy="227.2" r="3.0" fill="rgba(165,160,172,.38)" stroke="#67656b" stroke-width="1.1"/>
<circle cx="271.0" cy="228.4" r="3.5" fill="rgba(165,160,172,.38)" stroke="#67656b" stroke-width="1.1"/>
<circle cx="285.0" cy="223.8" r="2.0" fill="rgba(165,160,172,.38)" stroke="#67656b" stroke-width="1.1"/>
<circle cx="301.8" cy="226.4" r="2.0" fill="rgba(165,160,172,.38)" stroke="#67656b" stroke-width="1.1"/>
<circle cx="316.5" cy="227.0" r="3.5" fill="rgba(165,160,172,.38)" stroke="#67656b" stroke-width="1.1"/>
<circle cx="248.4" cy="255.3" r="2.0" fill="rgba(165,160,172,.38)" stroke="#67656b" stroke-width="1.1"/>
<circle cx="246.2" cy="264.3" r="2.0" fill="rgba(165,160,172,.38)" stroke="#67656b" stroke-width="1.1"/>
<circle cx="289.5" cy="251.6" r="2.0" fill="rgba(165,160,172,.38)" stroke="#67656b" stroke-width="1.1"/>
<circle cx="306.0" cy="265.0" r="3.0" fill="rgba(165,160,172,.38)" stroke="#67656b" stroke-width="1.1"/>
<circle cx="284.4" cy="279.0" r="2.0" fill="rgba(165,160,172,.38)" stroke="#67656b" stroke-width="1.1"/>
<circle cx="348.1" cy="233.0" r="2.0" fill="rgba(165,160,172,.38)" stroke="#67656b" stroke-width="1.1"/>
<circle cx="365.8" cy="233.1" r="3.5" fill="rgba(165,160,172,.38)" stroke="#67656b" stroke-width="1.1"/>
<circle cx="335.0" cy="257.0" r="2.0" fill="rgba(165,160,172,.38)" stroke="#67656b" stroke-width="1.1"/>
<circle cx="343.6" cy="199.4" r="2.0" fill="rgba(165,160,172,.38)" stroke="#67656b" stroke-width="1.1"/>
<circle cx="352.4" cy="188.0" r="2.0" fill="rgba(165,160,172,.38)" stroke="#67656b" stroke-width="1.1"/>
<circle cx="356.9" cy="173.6" r="2.0" fill="rgba(165,160,172,.38)" stroke="#67656b" stroke-width="1.1"/>
<circle cx="366.3" cy="195.2" r="2.0" fill="rgba(165,160,172,.38)" stroke="#67656b" stroke-width="1.1"/>
<circle cx="376.5" cy="186.7" r="2.0" fill="rgba(165,160,172,.38)" stroke="#67656b" stroke-width="1.1"/>
<circle cx="384.0" cy="168.0" r="2.0" fill="rgba(165,160,172,.38)" stroke="#67656b" stroke-width="1.1"/>
<circle cx="403.0" cy="196.9" r="2.0" fill="rgba(165,160,172,.38)" stroke="#67656b" stroke-width="1.1"/>
<circle cx="413.9" cy="195.2" r="2.0" fill="rgba(165,160,172,.38)" stroke="#67656b" stroke-width="1.1"/>
<circle cx="405.5" cy="171.0" r="2.0" fill="rgba(165,160,172,.38)" stroke="#67656b" stroke-width="1.1"/>
<circle cx="406.3" cy="231.4" r="2.0" fill="rgba(165,160,172,.38)" stroke="#67656b" stroke-width="1.1"/>
<circle cx="389.4" cy="264.6" r="2.5" fill="rgba(165,160,172,.38)" stroke="#67656b" stroke-width="1.1"/>
<circle cx="375.4" cy="281.0" r="2.0" fill="rgba(165,160,172,.38)" stroke="#67656b" stroke-width="1.1"/>
<circle cx="380.2" cy="288.7" r="2.0" fill="rgba(165,160,172,.38)" stroke="#67656b" stroke-width="1.1"/>
<circle cx="377.3" cy="295.8" r="2.0" fill="rgba(165,160,172,.38)" stroke="#67656b" stroke-width="1.1"/>
<circle cx="359.4" cy="289.6" r="3.5" fill="rgba(165,160,172,.38)" stroke="#67656b" stroke-width="1.1"/>
<circle cx="340.9" cy="291.6" r="4.5" fill="rgba(165,160,172,.38)" stroke="#67656b" stroke-width="1.1"/>
<circle cx="317.8" cy="298.6" r="4.0" fill="rgba(165,160,172,.38)" stroke="#67656b" stroke-width="1.1"/>
<circle cx="286.1" cy="298.3" r="3.5" fill="rgba(165,160,172,.38)" stroke="#67656b" stroke-width="1.1"/>
<circle cx="396.2" cy="291.6" r="4.5" fill="rgba(165,160,172,.38)" stroke="#67656b" stroke-width="1.1"/>
<circle cx="421.5" cy="284.0" r="3.0" fill="rgba(165,160,172,.38)" stroke="#67656b" stroke-width="1.1"/>
<circle cx="428.2" cy="285.7" r="4.5" fill="rgba(165,160,172,.38)" stroke="#67656b" stroke-width="1.1"/>
<circle cx="446.2" cy="291.6" r="5.0" fill="rgba(165,160,172,.38)" stroke="#67656b" stroke-width="1.1"/>
<circle cx="462.4" cy="281.5" r="5.0" fill="rgba(165,160,172,.38)" stroke="#67656b" stroke-width="1.1"/>
<circle cx="437.5" cy="204.3" r="3.5" fill="rgba(165,160,172,.38)" stroke="#67656b" stroke-width="1.1"/>
<circle cx="456.5" cy="194.7" r="5.0" fill="rgba(165,160,172,.38)" stroke="#67656b" stroke-width="1.1"/>
<circle cx="455.7" cy="173.6" r="2.0" fill="rgba(165,160,172,.38)" stroke="#67656b" stroke-width="1.1"/>
<circle cx="451.8" cy="161.5" r="2.5" fill="rgba(165,160,172,.38)" stroke="#67656b" stroke-width="1.1"/>
<circle cx="461.0" cy="157.0" r="5.5" fill="rgba(165,160,172,.38)" stroke="#67656b" stroke-width="1.1"/>
<circle cx="433.8" cy="152.9" r="2.5" fill="rgba(165,160,172,.38)" stroke="#67656b" stroke-width="1.1"/>
<circle cx="432.0" cy="163.5" r="2.0" fill="rgba(165,160,172,.38)" stroke="#67656b" stroke-width="1.1"/>
<circle cx="411.3" cy="150.0" r="2.0" fill="rgba(165,160,172,.38)" stroke="#67656b" stroke-width="1.1"/>
<circle cx="469.5" cy="232.6" r="3.0" fill="rgba(165,160,172,.38)" stroke="#67656b" stroke-width="1.1"/>
<circle cx="574.7" cy="154.2" r="5.5" fill="rgba(165,160,172,.38)" stroke="#67656b" stroke-width="1.1"/>
<circle cx="585.6" cy="150.8" r="4.0" fill="rgba(165,160,172,.38)" stroke="#67656b" stroke-width="1.1"/>
<circle cx="535.6" cy="170.6" r="4.0" fill="rgba(165,160,172,.38)" stroke="#67656b" stroke-width="1.1"/>
<circle cx="547.7" cy="181.2" r="4.0" fill="rgba(165,160,172,.38)" stroke="#67656b" stroke-width="1.1"/>
<circle cx="541.5" cy="175.3" r="2.0" fill="rgba(165,160,172,.38)" stroke="#67656b" stroke-width="1.1"/>
<circle cx="543.5" cy="163.0" r="2.0" fill="rgba(165,160,172,.38)" stroke="#67656b" stroke-width="1.1"/>
<circle cx="548.9" cy="161.5" r="2.0" fill="rgba(165,160,172,.38)" stroke="#67656b" stroke-width="1.1"/>
<circle cx="558.6" cy="157.6" r="2.0" fill="rgba(165,160,172,.38)" stroke="#67656b" stroke-width="1.1"/>
<circle cx="505.6" cy="155.0" r="2.5" fill="rgba(165,160,172,.38)" stroke="#67656b" stroke-width="1.1"/>
<circle cx="506.0" cy="163.8" r="2.0" fill="rgba(165,160,172,.38)" stroke="#67656b" stroke-width="1.1"/>
<circle cx="499.7" cy="171.0" r="3.0" fill="rgba(165,160,172,.38)" stroke="#67656b" stroke-width="1.1"/>
<circle cx="498.0" cy="179.0" r="2.0" fill="rgba(165,160,172,.38)" stroke="#67656b" stroke-width="1.1"/>
<circle cx="476.9" cy="159.0" r="2.0" fill="rgba(165,160,172,.38)" stroke="#67656b" stroke-width="1.1"/>
<circle cx="485.8" cy="165.2" r="2.0" fill="rgba(165,160,172,.38)" stroke="#67656b" stroke-width="1.1"/>
<circle cx="472.7" cy="171.4" r="2.0" fill="rgba(165,160,172,.38)" stroke="#67656b" stroke-width="1.1"/>
<circle cx="477.4" cy="179.5" r="2.5" fill="rgba(165,160,172,.38)" stroke="#67656b" stroke-width="1.1"/>
<circle cx="482.8" cy="190.0" r="2.5" fill="rgba(165,160,172,.38)" stroke="#67656b" stroke-width="1.1"/>
<circle cx="475.2" cy="197.7" r="2.0" fill="rgba(165,160,172,.38)" stroke="#67656b" stroke-width="1.1"/>
<circle cx="479.4" cy="214.0" r="2.0" fill="rgba(165,160,172,.38)" stroke="#67656b" stroke-width="1.1"/>
<circle cx="503.5" cy="210.7" r="2.0" fill="rgba(165,160,172,.38)" stroke="#67656b" stroke-width="1.1"/>
<circle cx="522.4" cy="214.9" r="2.0" fill="rgba(165,160,172,.38)" stroke="#67656b" stroke-width="1.1"/>
<circle cx="551.0" cy="208.7" r="2.0" fill="rgba(165,160,172,.38)" stroke="#67656b" stroke-width="1.1"/>
<circle cx="580.2" cy="173.3" r="2.0" fill="rgba(165,160,172,.38)" stroke="#67656b" stroke-width="1.1"/>
<circle cx="594.9" cy="170.7" r="2.0" fill="rgba(165,160,172,.38)" stroke="#67656b" stroke-width="1.1"/>
<circle cx="613.4" cy="178.7" r="5.5" fill="rgba(165,160,172,.38)" stroke="#67656b" stroke-width="1.1"/>
<circle cx="626.9" cy="181.2" r="2.5" fill="rgba(165,160,172,.38)" stroke="#67656b" stroke-width="1.1"/>
<circle cx="642.9" cy="174.0" r="3.0" fill="rgba(165,160,172,.38)" stroke="#67656b" stroke-width="1.1"/>
<circle cx="651.0" cy="155.4" r="2.0" fill="rgba(165,160,172,.38)" stroke="#67656b" stroke-width="1.1"/>
<circle cx="663.1" cy="159.6" r="2.0" fill="rgba(165,160,172,.38)" stroke="#67656b" stroke-width="1.1"/>
<circle cx="693.5" cy="172.8" r="5.0" fill="rgba(165,160,172,.38)" stroke="#67656b" stroke-width="1.1"/>
<circle cx="706.5" cy="156.2" r="3.5" fill="rgba(165,160,172,.38)" stroke="#67656b" stroke-width="1.1"/>
<circle cx="666.8" cy="189.1" r="6.5" fill="rgba(165,160,172,.38)" stroke="#67656b" stroke-width="1.1"/>
<circle cx="614.3" cy="195.8" r="2.0" fill="rgba(165,160,172,.38)" stroke="#67656b" stroke-width="1.1"/>
<circle cx="582.2" cy="199.7" r="5.0" fill="rgba(165,160,172,.38)" stroke="#67656b" stroke-width="1.1"/>
<circle cx="637.9" cy="217.4" r="6.5" fill="rgba(165,160,172,.38)" stroke="#67656b" stroke-width="1.1"/>
<circle cx="491.2" cy="223.8" r="4.0" fill="rgba(165,160,172,.38)" stroke="#67656b" stroke-width="1.1"/>
<circle cx="507.7" cy="227.0" r="3.5" fill="rgba(165,160,172,.38)" stroke="#67656b" stroke-width="1.1"/>
<circle cx="539.3" cy="217.8" r="3.0" fill="rgba(165,160,172,.38)" stroke="#67656b" stroke-width="1.1"/>
<circle cx="540.0" cy="224.2" r="4.0" fill="rgba(165,160,172,.38)" stroke="#67656b" stroke-width="1.1"/>
<circle cx="559.5" cy="226.4" r="2.0" fill="rgba(165,160,172,.38)" stroke="#67656b" stroke-width="1.1"/>
<circle cx="590.2" cy="229.2" r="2.0" fill="rgba(165,160,172,.38)" stroke="#67656b" stroke-width="1.1"/>
<circle cx="573.5" cy="236.5" r="2.0" fill="rgba(165,160,172,.38)" stroke="#67656b" stroke-width="1.1"/>
<circle cx="605.8" cy="242.2" r="5.0" fill="rgba(165,160,172,.38)" stroke="#67656b" stroke-width="1.1"/>
<circle cx="617.3" cy="237.1" r="4.0" fill="rgba(165,160,172,.38)" stroke="#67656b" stroke-width="1.1"/>
<circle cx="594.5" cy="248.6" r="3.0" fill="rgba(165,160,172,.38)" stroke="#67656b" stroke-width="1.1"/>
<circle cx="587.3" cy="255.8" r="2.0" fill="rgba(165,160,172,.38)" stroke="#67656b" stroke-width="1.1"/>
<circle cx="525.0" cy="240.7" r="2.0" fill="rgba(165,160,172,.38)" stroke="#67656b" stroke-width="1.1"/>
<circle cx="537.2" cy="244.7" r="2.0" fill="rgba(165,160,172,.38)" stroke="#67656b" stroke-width="1.1"/>
<circle cx="500.5" cy="246.0" r="2.0" fill="rgba(165,160,172,.38)" stroke="#67656b" stroke-width="1.1"/>
<circle cx="478.6" cy="249.1" r="2.0" fill="rgba(165,160,172,.38)" stroke="#67656b" stroke-width="1.1"/>
<circle cx="487.0" cy="260.4" r="2.0" fill="rgba(165,160,172,.38)" stroke="#67656b" stroke-width="1.1"/>
<circle cx="482.0" cy="264.3" r="2.0" fill="rgba(165,160,172,.38)" stroke="#67656b" stroke-width="1.1"/>
<circle cx="493.8" cy="266.8" r="3.0" fill="rgba(165,160,172,.38)" stroke="#67656b" stroke-width="1.1"/>
<circle cx="525.8" cy="255.8" r="2.5" fill="rgba(165,160,172,.38)" stroke="#67656b" stroke-width="1.1"/>
<circle cx="551.0" cy="252.0" r="2.0" fill="rgba(165,160,172,.38)" stroke="#67656b" stroke-width="1.1"/>
<circle cx="544.0" cy="260.0" r="2.0" fill="rgba(165,160,172,.38)" stroke="#67656b" stroke-width="1.1"/>
<circle cx="562.0" cy="257.9" r="2.0" fill="rgba(165,160,172,.38)" stroke="#67656b" stroke-width="1.1"/>
<circle cx="574.7" cy="267.5" r="2.0" fill="rgba(165,160,172,.38)" stroke="#67656b" stroke-width="1.1"/>
<circle cx="537.2" cy="269.3" r="2.0" fill="rgba(165,160,172,.38)" stroke="#67656b" stroke-width="1.1"/>
<circle cx="598.3" cy="269.7" r="3.5" fill="rgba(165,160,172,.38)" stroke="#67656b" stroke-width="1.1"/>
<circle cx="515.7" cy="277.3" r="2.0" fill="rgba(165,160,172,.38)" stroke="#67656b" stroke-width="1.1"/>
<circle cx="531.7" cy="279.3" r="2.0" fill="rgba(165,160,172,.38)" stroke="#67656b" stroke-width="1.1"/>
<circle cx="550.2" cy="279.0" r="3.5" fill="rgba(165,160,172,.38)" stroke="#67656b" stroke-width="1.1"/>
<circle cx="591.5" cy="279.8" r="2.0" fill="rgba(165,160,172,.38)" stroke="#67656b" stroke-width="1.1"/>
<circle cx="524.6" cy="290.7" r="4.5" fill="rgba(165,160,172,.38)" stroke="#67656b" stroke-width="1.1"/>
<circle cx="488.7" cy="298.3" r="4.0" fill="rgba(165,160,172,.38)" stroke="#67656b" stroke-width="1.1"/>
<circle cx="567.0" cy="299.2" r="2.0" fill="rgba(165,160,172,.38)" stroke="#67656b" stroke-width="1.1"/>
<circle cx="129.5" cy="303.8" r="2.0" fill="rgba(165,160,172,.38)" stroke="#67656b" stroke-width="1.1"/>
<circle cx="202.0" cy="300.9" r="2.0" fill="rgba(165,160,172,.38)" stroke="#67656b" stroke-width="1.1"/>
<circle cx="82.8" cy="324.0" r="2.0" fill="rgba(165,160,172,.38)" stroke="#67656b" stroke-width="1.1"/>
<circle cx="93.1" cy="344.4" r="2.0" fill="rgba(165,160,172,.38)" stroke="#67656b" stroke-width="1.1"/>
<circle cx="111.9" cy="328.7" r="2.0" fill="rgba(165,160,172,.38)" stroke="#67656b" stroke-width="1.1"/>
<circle cx="186.2" cy="340.7" r="2.0" fill="rgba(165,160,172,.38)" stroke="#67656b" stroke-width="1.1"/>
<circle cx="213.5" cy="335.9" r="2.0" fill="rgba(165,160,172,.38)" stroke="#67656b" stroke-width="1.1"/>
<circle cx="205.0" cy="329.0" r="2.0" fill="rgba(165,160,172,.38)" stroke="#67656b" stroke-width="1.1"/>
<circle cx="196.1" cy="347.0" r="2.0" fill="rgba(165,160,172,.38)" stroke="#67656b" stroke-width="1.1"/>
<circle cx="166.0" cy="353.5" r="2.0" fill="rgba(165,160,172,.38)" stroke="#67656b" stroke-width="1.1"/>
<circle cx="176.0" cy="373.8" r="4.0" fill="rgba(165,160,172,.38)" stroke="#67656b" stroke-width="1.1"/>
<circle cx="157.5" cy="373.1" r="2.0" fill="rgba(165,160,172,.38)" stroke="#67656b" stroke-width="1.1"/>
<circle cx="163.0" cy="380.3" r="2.0" fill="rgba(165,160,172,.38)" stroke="#67656b" stroke-width="1.1"/>
<circle cx="120.1" cy="378.9" r="4.0" fill="rgba(165,160,172,.38)" stroke="#67656b" stroke-width="1.1"/>
<circle cx="165.4" cy="411.4" r="2.0" fill="rgba(165,160,172,.38)" stroke="#67656b" stroke-width="1.1"/>
<circle cx="152.9" cy="418.2" r="6.0" fill="rgba(165,160,172,.38)" stroke="#67656b" stroke-width="1.1"/>
<circle cx="173.9" cy="425.6" r="4.0" fill="rgba(165,160,172,.38)" stroke="#67656b" stroke-width="1.1"/>
<circle cx="261.6" cy="302.5" r="4.0" fill="rgba(165,160,172,.38)" stroke="#67656b" stroke-width="1.1"/>
<circle cx="323.6" cy="304.8" r="2.0" fill="rgba(165,160,172,.38)" stroke="#67656b" stroke-width="1.1"/>
<circle cx="340.0" cy="313.8" r="2.0" fill="rgba(165,160,172,.38)" stroke="#67656b" stroke-width="1.1"/>
<circle cx="353.0" cy="318.0" r="3.0" fill="rgba(165,160,172,.38)" stroke="#67656b" stroke-width="1.1"/>
<circle cx="373.8" cy="302.7" r="5.5" fill="rgba(165,160,172,.38)" stroke="#67656b" stroke-width="1.1"/>
<circle cx="519.9" cy="187.1" r="12.5" fill="rgba(165,160,172,.38)" stroke="#67656b" stroke-width="1.1"/>
<circle cx="574.9" cy="314.5" r="4.5" fill="rgba(165,160,172,.38)" stroke="#67656b" stroke-width="1.1"/>
<circle cx="593.1" cy="315.4" r="2.0" fill="rgba(165,160,172,.38)" stroke="#67656b" stroke-width="1.1"/>
<circle cx="580.3" cy="329.9" r="5.5" fill="rgba(165,160,172,.38)" stroke="#67656b" stroke-width="1.1"/>
<circle cx="584.6" cy="338.4" r="5.5" fill="rgba(165,160,172,.38)" stroke="#67656b" stroke-width="1.1"/>
<circle cx="569.7" cy="341.3" r="3.5" fill="rgba(165,160,172,.38)" stroke="#67656b" stroke-width="1.1"/>
<circle cx="584.1" cy="342.4" r="2.0" fill="rgba(165,160,172,.38)" stroke="#67656b" stroke-width="1.1"/>
<circle cx="605.1" cy="338.4" r="6.0" fill="rgba(165,160,172,.38)" stroke="#67656b" stroke-width="1.1"/>
<circle cx="599.1" cy="381.7" r="2.5" fill="rgba(165,160,172,.38)" stroke="#67656b" stroke-width="1.1"/>
<circle cx="588.0" cy="388.8" r="2.0" fill="rgba(165,160,172,.38)" stroke="#67656b" stroke-width="1.1"/>
<circle cx="615.3" cy="388.5" r="2.0" fill="rgba(165,160,172,.38)" stroke="#67656b" stroke-width="1.1"/>
<circle cx="620.0" cy="366.6" r="5.5" fill="rgba(165,160,172,.38)" stroke="#67656b" stroke-width="1.1"/>
<circle cx="624.4" cy="372.3" r="3.5" fill="rgba(165,160,172,.38)" stroke="#67656b" stroke-width="1.1"/>
<circle cx="626.8" cy="387.1" r="6.0" fill="rgba(165,160,172,.38)" stroke="#67656b" stroke-width="1.1"/>
<circle cx="612.4" cy="403.0" r="2.0" fill="rgba(165,160,172,.38)" stroke="#67656b" stroke-width="1.1"/>
<circle cx="589.7" cy="420.8" r="5.5" fill="rgba(165,160,172,.38)" stroke="#67656b" stroke-width="1.1"/>
<circle cx="631.6" cy="431.9" r="10.0" fill="rgba(165,160,172,.38)" stroke="#67656b" stroke-width="1.1"/>
<circle cx="585.5" cy="364.0" r="7.5" fill="rgba(165,160,172,.38)" stroke="#67656b" stroke-width="1.1"/>
<circle cx="601.7" cy="351.2" r="10.5" fill="rgba(165,160,172,.38)" stroke="#67656b" stroke-width="1.1"/>
<circle cx="572.3" cy="365.8" r="10.5" fill="rgba(165,160,172,.38)" stroke="#67656b" stroke-width="1.1"/>
<circle cx="578.6" cy="393.6" r="8.0" fill="rgba(165,160,172,.38)" stroke="#67656b" stroke-width="1.1"/>
<circle cx="582.9" cy="399.0" r="5.5" fill="rgba(165,160,172,.38)" stroke="#67656b" stroke-width="1.1"/>
<circle cx="584.3" cy="406.8" r="7.5" fill="rgba(165,160,172,.38)" stroke="#67656b" stroke-width="1.1"/>
<circle cx="250.4" cy="10.4" r="7" fill="rgba(165,160,172,.42)" stroke="#67656b" stroke-width="1.2"/>
<circle cx="250.4" cy="10.4" r="2" fill="#7d7b80"/>
<circle cx="372.6" cy="143.3" r="5" fill="rgba(165,160,172,.42)" stroke="#67656b" stroke-width="1.2"/>
<circle cx="372.6" cy="143.3" r="2" fill="#7d7b80"/>
<circle cx="192" cy="218.4" r="16.4" fill="rgba(165,160,172,.42)" stroke="#67656b" stroke-width="1.2"/>
<circle cx="192" cy="218.4" r="2.6" fill="#7d7b80"/>
<circle cx="229" cy="313.3" r="16.5" fill="rgba(165,160,172,.42)" stroke="#67656b" stroke-width="1.2"/>
<circle cx="229" cy="313.3" r="2.6" fill="#7d7b80"/>
<circle cx="166" cy="295.7" r="13.5" fill="rgba(165,160,172,.42)" stroke="#67656b" stroke-width="1.2"/>
<circle cx="166" cy="295.7" r="2" fill="#f07a3c"/>
<circle cx="145.7" cy="321.8" r="9.7" fill="rgba(165,160,172,.42)" stroke="#67656b" stroke-width="1.2"/>
<circle cx="145.7" cy="321.8" r="2.6" fill="#7d7b80"/>
<circle cx="593.2" cy="294.4" r="9.5" fill="rgba(165,160,172,.42)" stroke="#67656b" stroke-width="1.2"/>
<circle cx="593.2" cy="294.4" r="2.6" fill="#7d7b80"/>
<text x="124" y="38.8" font-size="13.5" fill="#6f605c" textLength="48.80000000000001" lengthAdjust="spacingAndGlyphs" font-weight="normal" stroke="#f3f2ef" stroke-width="2.5" paint-order="stroke" stroke-opacity=".8">KANSAS</text>
<text x="142.4" y="129.8" font-size="13.5" fill="#6f605c" textLength="75.0" lengthAdjust="spacingAndGlyphs" font-weight="normal" stroke="#f3f2ef" stroke-width="2.5" paint-order="stroke" stroke-opacity=".8">OKLAHOMA</text>
<text x="285.3" y="54.8" font-size="13.5" fill="#6f605c" textLength="60.30000000000001" lengthAdjust="spacingAndGlyphs" font-weight="normal" stroke="#f3f2ef" stroke-width="2.5" paint-order="stroke" stroke-opacity=".8">MISSOURI</text>
<text x="268" y="169.4" font-size="13.5" fill="#6f605c" textLength="67" lengthAdjust="spacingAndGlyphs" font-weight="normal" stroke="#f3f2ef" stroke-width="2.5" paint-order="stroke" stroke-opacity=".8">ARKANSAS</text>
<text x="423" y="125.6" font-size="13.5" fill="#6f605c" textLength="69" lengthAdjust="spacingAndGlyphs" font-weight="normal" stroke="#f3f2ef" stroke-width="2.5" paint-order="stroke" stroke-opacity=".8">TENNESSEE</text>
<text x="469.5" y="75.8" font-size="13.5" fill="#6f605c" textLength="65.5" lengthAdjust="spacingAndGlyphs" font-weight="normal" stroke="#f3f2ef" stroke-width="2.5" paint-order="stroke" stroke-opacity=".8">KENTUCKY</text>
<text x="611" y="16.9" font-size="13.5" fill="#6f605c" textLength="32.799999999999955" lengthAdjust="spacingAndGlyphs" font-weight="normal" stroke="#f3f2ef" stroke-width="2.5" paint-order="stroke" stroke-opacity=".8">WEST</text>
<text x="598.6" y="31.2" font-size="13.5" fill="#6f605c" textLength="55.299999999999955" lengthAdjust="spacingAndGlyphs" font-weight="normal" stroke="#f3f2ef" stroke-width="2.5" paint-order="stroke" stroke-opacity=".8">VIRGINIA</text>
<text x="644.6" y="75.8" font-size="13.5" fill="#6f605c" textLength="56.39999999999998" lengthAdjust="spacingAndGlyphs" font-weight="normal" stroke="#f3f2ef" stroke-width="2.5" paint-order="stroke" stroke-opacity=".8">VIRGINIA</text>
<text x="620.4" y="131.7" font-size="13.5" fill="#6f605c" textLength="114.89999999999998" lengthAdjust="spacingAndGlyphs" font-weight="normal" stroke="#f3f2ef" stroke-width="2.5" paint-order="stroke" stroke-opacity=".8">NORTH CAROLINA</text>
<text x="601.6" y="175.3" font-size="13.5" fill="#6f605c" textLength="43.0" lengthAdjust="spacingAndGlyphs" font-weight="normal" stroke="#f3f2ef" stroke-width="2.5" paint-order="stroke" stroke-opacity=".8">SOUTH</text>
<text x="589" y="190.5" font-size="13.5" fill="#6f605c" textLength="64.89999999999998" lengthAdjust="spacingAndGlyphs" font-weight="normal" stroke="#f3f2ef" stroke-width="2.5" paint-order="stroke" stroke-opacity=".8">CAROLINA</text>
<text x="125.6" y="265.5" font-size="13.5" fill="#6f605c" textLength="37.599999999999994" lengthAdjust="spacingAndGlyphs" font-weight="normal" stroke="#f3f2ef" stroke-width="2.5" paint-order="stroke" stroke-opacity=".8">TEXAS</text>
<text x="337.7" y="260.7" font-size="13.5" fill="#6f605c" textLength="70.30000000000001" lengthAdjust="spacingAndGlyphs" font-weight="normal" stroke="#f3f2ef" stroke-width="2.5" paint-order="stroke" stroke-opacity=".8">MISSISSIPPI</text>
<text x="288.3" y="293.6" font-size="13.5" fill="#6f605c" textLength="67.39999999999998" lengthAdjust="spacingAndGlyphs" font-weight="normal" stroke="#f3f2ef" stroke-width="2.5" paint-order="stroke" stroke-opacity=".8">LOUISIANA</text>
<text x="429.4" y="232.5" font-size="13.5" fill="#6f605c" textLength="62.400000000000034" lengthAdjust="spacingAndGlyphs" font-weight="normal" stroke="#f3f2ef" stroke-width="2.5" paint-order="stroke" stroke-opacity=".8">ALABAMA</text>
<text x="519" y="260.7" font-size="13.5" fill="#6f605c" textLength="56.5" lengthAdjust="spacingAndGlyphs" font-weight="normal" stroke="#f3f2ef" stroke-width="2.5" paint-order="stroke" stroke-opacity=".8">GEORGIA</text>
<text x="574.3" y="386.8" font-size="13.5" fill="#6f605c" textLength="51.30000000000007" lengthAdjust="spacingAndGlyphs" font-weight="normal" stroke="#f3f2ef" stroke-width="2.5" paint-order="stroke" stroke-opacity=".8">FLORIDA</text>
<text x="734.6" y="29" font-size="13.5" fill="#6f605c" textLength="67.39999999999998" lengthAdjust="spacingAndGlyphs" font-weight="normal" stroke="#f3f2ef" stroke-width="2.5" paint-order="stroke" stroke-opacity=".8">DELAWARE</text>
<text x="17" y="398.6" font-size="10.5" fill="#6f605c" textLength="53" lengthAdjust="spacingAndGlyphs" font-weight="normal" stroke="#f3f2ef" stroke-width="2.5" paint-order="stroke" stroke-opacity=".8">COAHUILA</text>
<text x="83.7" y="405.6" font-size="10.5" fill="#6f605c" textLength="36.3" lengthAdjust="spacingAndGlyphs" font-weight="normal" stroke="#f3f2ef" stroke-width="2.5" paint-order="stroke" stroke-opacity=".8">NUEVO</text>
<text x="88.8" y="417.5" font-size="10.5" fill="#6f605c" textLength="27.0" lengthAdjust="spacingAndGlyphs" font-weight="normal" stroke="#f3f2ef" stroke-width="2.5" paint-order="stroke" stroke-opacity=".8">LEÓN</text>
<text x="215" y="28.6" font-size="13.5" fill="#555458" textLength="70" lengthAdjust="spacingAndGlyphs" font-weight="normal" stroke="#f3f2ef" stroke-width="2.5" paint-order="stroke" stroke-opacity=".8">Kansas City</text>
<text x="340.6" y="131.5" font-size="13.5" fill="#555458" textLength="58.099999999999966" lengthAdjust="spacingAndGlyphs" font-weight="normal" stroke="#f3f2ef" stroke-width="2.5" paint-order="stroke" stroke-opacity=".8">Memphis</text>
<text x="173.6" y="237.6" font-size="13" fill="#555458" textLength="37.900000000000006" lengthAdjust="spacingAndGlyphs" font-weight="normal" stroke="#f3f2ef" stroke-width="2.5" paint-order="stroke" stroke-opacity=".8">Dallas</text>
<text x="105" y="340.7" font-size="14" fill="#555458" textLength="80.30000000000001" lengthAdjust="spacingAndGlyphs" font-weight="normal" stroke="#f3f2ef" stroke-width="2.5" paint-order="stroke" stroke-opacity=".8">San Antonio</text>
<text x="201.9" y="330.9" font-size="14" fill="#555458" textLength="55.49999999999997" lengthAdjust="spacingAndGlyphs" font-weight="normal" stroke="#f3f2ef" stroke-width="2.5" paint-order="stroke" stroke-opacity=".8">Houston</text>
<text x="556.4" y="314" font-size="13.5" fill="#555458" textLength="74.60000000000002" lengthAdjust="spacingAndGlyphs" font-weight="normal" stroke="#f3f2ef" stroke-width="2.5" paint-order="stroke" stroke-opacity=".8">Jacksonville</text>
<text x="142.4" y="285.7" font-size="17" fill="#444347" textLength="48.099999999999994" lengthAdjust="spacingAndGlyphs" font-weight="normal" stroke="#f3f2ef" stroke-width="2.5" paint-order="stroke" stroke-opacity=".8">Austin</text>
<text x="104.2" y="441.8" font-size="17.5" fill="#444347" textLength="82.8" lengthAdjust="spacingAndGlyphs" font-weight="normal" stroke="#f3f2ef" stroke-width="2.5" paint-order="stroke" stroke-opacity=".8">Monterrey</text>
<text x="425" y="428" font-size="13" fill="#4e6fcf" textLength="88" lengthAdjust="spacingAndGlyphs" font-weight="normal" >Gulf of Mexico</text>
<text x="350.3" y="441.9" font-size="13" fill="#4e6fcf" textLength="42.69999999999999" lengthAdjust="spacingAndGlyphs" font-weight="normal" >Gulf of</text>
<text x="350.3" y="455" font-size="13" fill="#4e6fcf" textLength="42.69999999999999" lengthAdjust="spacingAndGlyphs" font-weight="normal" >Mexico</text>
<text x="666" y="441.8" font-size="10.5" fill="#222" textLength="219.79999999999995" lengthAdjust="spacingAndGlyphs" font-weight="normal" stroke="#fff" stroke-width="2" paint-order="stroke" stroke-opacity=".6">© 2024 TomTom, © 2024 Microsoft Corporation</text>
<text x="894.2" y="441.8" font-size="10.5" fill="#3b4db3" textLength="28.299999999999955" lengthAdjust="spacingAndGlyphs" font-weight="normal" text-decoration="underline">Terms</text>
<line x1="894.2" y1="443.5" x2="922.5" y2="443.5" stroke="#3b4db3" stroke-width="0.8"/>
<text x="20.5" y="437.5" font-size="10" fill="#7d7d80" textLength="58.099999999999994" lengthAdjust="spacingAndGlyphs" font-weight="normal" >Microsoft Bing</text>
<rect x="6" y="428" width="5.2" height="5.2" fill="#f25022"/><rect x="11.8" y="428" width="5.2" height="5.2" fill="#7fba00"/><rect x="6" y="433.8" width="5.2" height="5.2" fill="#00a4ef"/><rect x="11.8" y="433.8" width="5.2" height="5.2" fill="#ffb900"/>
<circle cx="98.6" cy="436.1" r="2.2" fill="#f07a3c"/><circle cx="79.8" cy="443.2" r="2.2" fill="#f07a3c"/>
<text x="0" y="456" font-size="13" fill="#555458" textLength="37" lengthAdjust="spacingAndGlyphs" font-weight="normal" >rreón</text>
</svg></div>

<!-- bottom table card -->
<div class="abs" style="left:347px;top:686px;width:1468px;height:220px;border:1px solid #222;background:#f8f8fb"></div>
<div class="abs" style="left:353px;top:692px;width:1447px;height:198px;background:#fff"></div>
<div class="t" style="left:360px;top:697px;line-height:18px">Year</div>
<div class="t" style="left:360px;top:721px;line-height:18px">City</div>
<svg class="abs" style="left:359px;top:739px" width="11" height="7" viewBox="0 0 11 7"><path d="M0.5 6.5 L5.5 0.5 L10.5 6.5Z" fill="#222"/></svg>
<div class="t" style="left:603px;top:696.3px;line-height:18px">2022</div>
<div class="t" style="left:1152px;top:696.3px;line-height:18px">2023</div>
<div class="t" style="left:1702px;top:696.3px;line-height:18px">2024</div>
<div class="t" style="left:603px;top:721px;line-height:18px">Sum of 1 Unit</div>
<div class="t" style="left:711px;top:721px;line-height:18px">Sum of 2 Units</div>
<div class="t" style="left:824px;top:721px;line-height:18px">Sum of 3 and 4 Units</div>
<div class="t" style="left:980px;top:721px;line-height:18px">Sum of 5 Units or More</div>
<div class="t" style="left:1152px;top:721px;line-height:18px">Sum of 1 Unit</div>
<div class="t" style="left:1260px;top:721px;line-height:18px">Sum of 2 Units</div>
<div class="t" style="left:1373px;top:721px;line-height:18px">Sum of 3 and 4 Units</div>
<div class="t" style="left:1529px;top:721px;line-height:18px">Sum of 5 Units or More</div>
<div class="t" style="left:1702px;top:721px;line-height:18px">Sum of 1 Unit</div>
<div class="abs" style="left:353px;top:749px;width:1446px;height:2px;background:#b39ddb"></div>
<div class="t" style="left:360px;top:751.60px;line-height:23.33px">Aberdeen</div>
<div class="t" style="left:1696px;width:102px;text-align:right;top:751.30px;line-height:23.33px;font-size:15px">21</div>
<div class="abs" style="left:353px;top:773.93px;width:1446px;height:23.33px;background:#ebebeb"></div>
<div class="t" style="left:360px;top:774.93px;line-height:23.33px">Abilene</div>
<div class="t" style="left:597px;width:102px;text-align:right;top:774.63px;line-height:23.33px;font-size:15px">473</div>
<div class="t" style="left:705px;width:107px;text-align:right;top:774.63px;line-height:23.33px;font-size:15px">52</div>
<div class="t" style="left:818px;width:150px;text-align:right;top:774.63px;line-height:23.33px;font-size:15px">0</div>
<div class="t" style="left:974px;width:166px;text-align:right;top:774.63px;line-height:23.33px;font-size:15px">274</div>
<div class="t" style="left:1146px;width:102px;text-align:right;top:774.63px;line-height:23.33px;font-size:15px">336</div>
<div class="t" style="left:1254px;width:107px;text-align:right;top:774.63px;line-height:23.33px;font-size:15px">56</div>
<div class="t" style="left:1367px;width:150px;text-align:right;top:774.63px;line-height:23.33px;font-size:15px">0</div>
<div class="t" style="left:1523px;width:167px;text-align:right;top:774.63px;line-height:23.33px;font-size:15px">64</div>
<div class="t" style="left:1696px;width:102px;text-align:right;top:774.63px;line-height:23.33px;font-size:15px">28</div>
<div class="t" style="left:360px;top:798.26px;line-height:23.33px">Ada</div>
<div class="t" style="left:1696px;width:102px;text-align:right;top:797.96px;line-height:23.33px;font-size:15px">0</div>
<div class="abs" style="left:353px;top:820.59px;width:1446px;height:23.33px;background:#ebebeb"></div>
<div class="t" style="left:360px;top:821.59px;line-height:23.33px">Adrian</div>
<div class="t" style="left:1696px;width:102px;text-align:right;top:821.29px;line-height:23.33px;font-size:15px">4</div>
<div class="t" style="left:360px;top:844.92px;line-height:23.33px">Akron</div>
<div class="t" style="left:597px;width:102px;text-align:right;top:844.62px;line-height:23.33px;font-size:15px">799</div>
<div class="t" style="left:705px;width:107px;text-align:right;top:844.62px;line-height:23.33px;font-size:15px">68</div>
<div class="t" style="left:818px;width:150px;text-align:right;top:844.62px;line-height:23.33px;font-size:15px">421</div>
<div class="t" style="left:974px;width:166px;text-align:right;top:844.62px;line-height:23.33px;font-size:15px">1615</div>
<div class="t" style="left:1146px;width:102px;text-align:right;top:844.62px;line-height:23.33px;font-size:15px">696</div>
<div class="t" style="left:1254px;width:107px;text-align:right;top:844.62px;line-height:23.33px;font-size:15px">4</div>
<div class="t" style="left:1367px;width:150px;text-align:right;top:844.62px;line-height:23.33px;font-size:15px">121</div>
<div class="t" style="left:1523px;width:167px;text-align:right;top:844.62px;line-height:23.33px;font-size:15px">206</div>
<div class="t" style="left:1696px;width:102px;text-align:right;top:844.62px;line-height:23.33px;font-size:15px">58</div>
<div class="abs" style="left:353px;top:867.25px;width:1446px;height:23.33px;background:#ebebeb"></div>
<div class="t" style="left:360px;top:868.25px;line-height:23.33px">Alamogordo</div>
<div class="t" style="left:1696px;width:102px;text-align:right;top:867.95px;line-height:23.33px;font-size:15px">1</div>
<div class="abs" style="left:705px;top:692px;width:1px;height:198px;background:rgba(255,255,255,.55)"></div>
<div class="abs" style="left:818px;top:692px;width:1px;height:198px;background:rgba(255,255,255,.55)"></div>
<div class="abs" style="left:974px;top:692px;width:1px;height:198px;background:rgba(255,255,255,.55)"></div>
<div class="abs" style="left:1146px;top:692px;width:1px;height:198px;background:rgba(255,255,255,.55)"></div>
<div class="abs" style="left:1254px;top:692px;width:1px;height:198px;background:rgba(255,255,255,.55)"></div>
<div class="abs" style="left:1367px;top:692px;width:1px;height:198px;background:rgba(255,255,255,.55)"></div>
<div class="abs" style="left:1523px;top:692px;width:1px;height:198px;background:rgba(255,255,255,.55)"></div>
<div class="abs" style="left:1696px;top:692px;width:1px;height:198px;background:rgba(255,255,255,.55)"></div>
<div class="abs" style="left:597px;top:751px;width:1.5px;height:140px;background:#9d85dc"></div>
<div class="abs" style="left:1801px;top:694px;width:8px;height:31px;background:#a9a9a9;border-radius:4px"></div>

</body></html>
